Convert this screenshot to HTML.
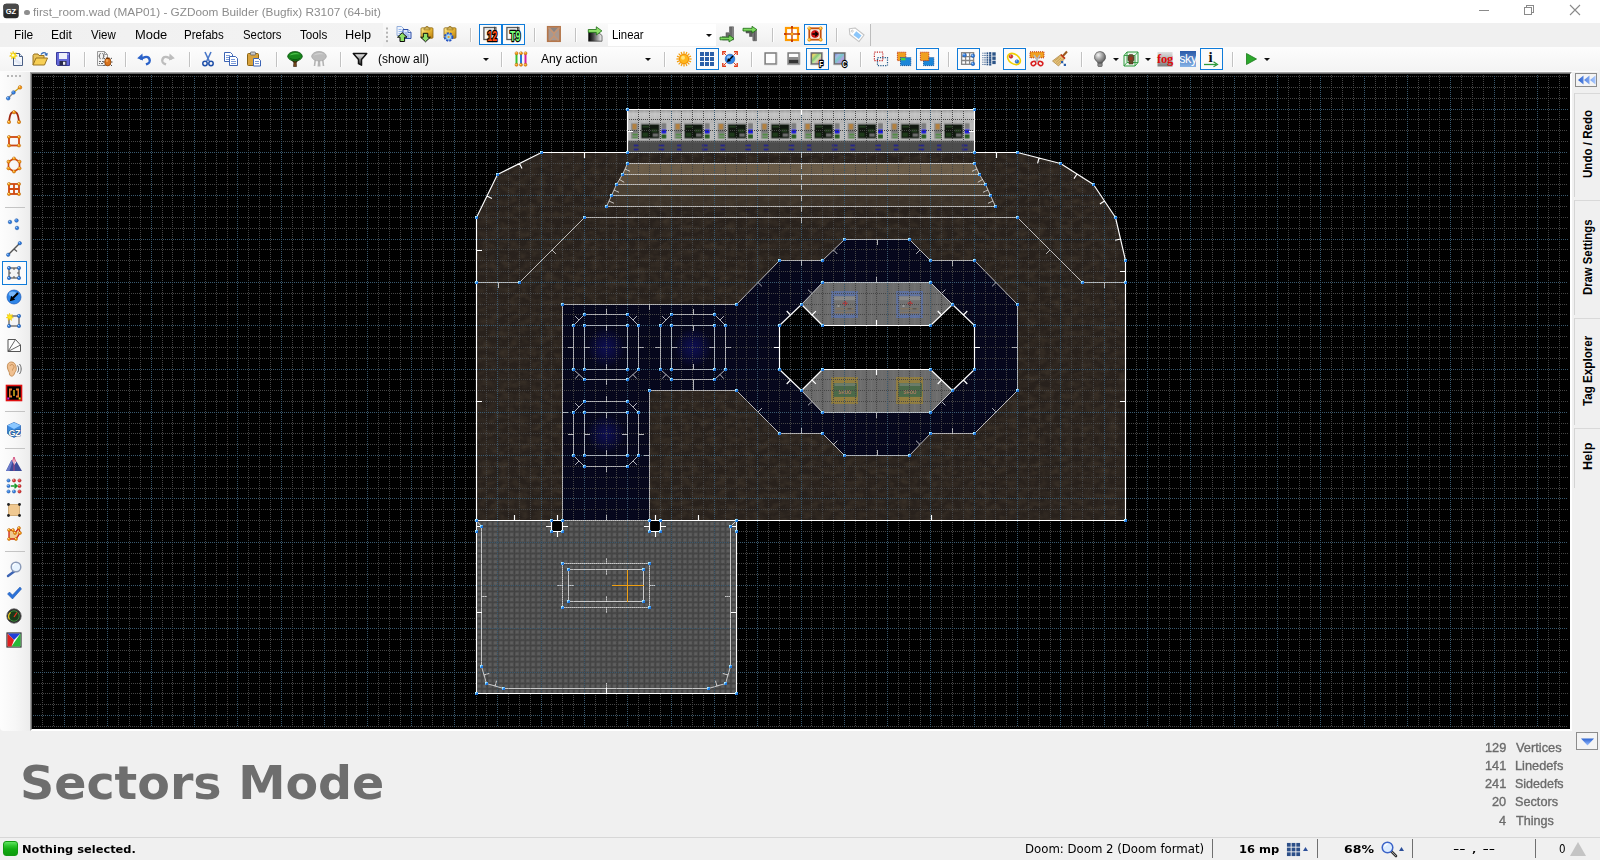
<!DOCTYPE html>
<html lang="en"><head><meta charset="utf-8"><title>first_room.wad (MAP01) - GZDoom Builder (Bugfix) R3107 (64-bit)</title>
<style>
*{box-sizing:border-box}
html,body{margin:0;padding:0}
body{width:1600px;height:860px;overflow:hidden;background:#f0f0f0;position:relative;font-family:"Liberation Sans",sans-serif;}
.abs{position:absolute}
.t{position:absolute;white-space:pre;line-height:normal;margin-top:-100px}
.t::before{content:"";display:inline-block;height:100px;width:0;vertical-align:baseline}
#titlebar{position:absolute;left:0;top:0;width:1600px;height:23px;background:#fff}
#menubar{position:absolute;left:0;top:23px;width:384px;height:24px;background:linear-gradient(90deg,#f0f0f0,#f3f3f3)}
#toolbar1{position:absolute;left:383px;top:23px;width:488px;height:24px;background:linear-gradient(#fafafa,#f5f5f5 55%,#eeeeee);border-radius:0 0 3px 0}
#menubar-end{position:absolute;left:870px;top:24px;width:1px;height:22px;background:#bdbdbd}
#toolbar2{position:absolute;left:0;top:47px;width:1600px;height:25px;background:linear-gradient(#fdfdfd,#f9f9f9 40%,#f4f4f4 94%,#fcfcfc 97%);border-radius:0 0 4px 0}
#lefttb{position:absolute;left:0;top:72px;width:30px;height:659px;background:linear-gradient(90deg,#fdfdfd,#f7f7f7 50%,#ececec);border-radius:0 0 0 4px}
#mapframe{position:absolute;left:30px;top:72px;width:1542px;height:659px;background:#000;border-style:solid;border-width:2px;border-color:#696969 #fff #fff #696969;}
#mapframe::before{content:"";position:absolute;left:-2px;top:-2px;right:-2px;bottom:-2px;border-style:solid;border-width:1px;border-color:#a0a0a0 #fff #fff #a0a0a0;pointer-events:none}
#map{position:absolute;left:32px;top:74px;width:1538px;height:655px;display:block}
.sep{position:absolute;width:1px;background:#c2c2c2;box-shadow:1px 0 0 #fff}
.hsep{position:absolute;height:1px;background:#c4c4c4}
.sel{position:absolute;border:1px solid #0f7bd9;background:#fbfbfb}
.ico{position:absolute;width:16px;height:16px;overflow:visible}
.combo{position:absolute;background:#fff;height:21px}
.arrow{position:absolute;width:0;height:0;border-left:3px solid transparent;border-right:3px solid transparent;border-top:3px solid #111}
.tab{position:absolute;left:1574px;width:26px;border-left:1px solid #d4d4d4;border-top:1px solid #d9d9d9;background:#f0f0f0}
.vt{position:absolute;white-space:pre;font:bold 13px "Liberation Sans",sans-serif;color:#000;transform-origin:0 0;line-height:14px;height:14px}
#statusbar{position:absolute;left:0;top:837px;width:1600px;height:23px;background:#f0f0f0;border-top:1px solid #d7d7d7}
.ssep{position:absolute;top:839px;width:1px;height:19px;background:#707070}
</style></head><body>
<div id="titlebar"></div>
<svg class="abs" style="left:3px;top:3px;width:16px;height:16px" viewBox="0 0 16 16"><rect x=".3" y=".8" width="15.4" height="14.400" rx="3" fill="#2a2a2a"/><rect x=".3" y=".8" width="15.4" height="7" rx="3" fill="#4a4a4a"/><text x="8" y="11" font-family="Liberation Sans,sans-serif" font-weight="bold" font-size="7.500" fill="#fff" text-anchor="middle">GZ</text></svg>
<div class="abs" style="left:24.300px;top:9.800px;width:5.400px;height:5.400px;border-radius:50%;background:#8e8e8e"></div>
<div class="t" style="left:33.18px;top:15.6px;font:11.800px 'Liberation Sans',sans-serif;color:#8c8c8c;transform:scaleX(0.9994);transform-origin:0 0;">first_room.wad (MAP01) - GZDoom Builder (Bugfix) R3107 (64-bit)</div>
<svg class="abs" style="left:1470px;top:0;width:130px;height:23px" viewBox="1470 0 130 23" fill="none" stroke="#8a8a8a" stroke-width="1"><path d="M1479 10.500h10" shape-rendering="crispEdges"/><path d="M1524.500 7.500h7v7h-7zM1526.500 7.500v-2h7v7h-2" shape-rendering="crispEdges"/><path d="M1570 5l10 10M1580 5l-10 10" stroke-width="1.100"/></svg>
<div id="menubar"></div><div id="toolbar1"></div><div id="menubar-end"></div>
<div class="t" style="left:14.34px;top:38.7px;font:12px 'Liberation Sans',sans-serif;color:#000;transform:scaleX(0.9954);transform-origin:0 0;">File</div>
<div class="t" style="left:51.33px;top:38.7px;font:12px 'Liberation Sans',sans-serif;color:#000;transform:scaleX(1.0059);transform-origin:0 0;">Edit</div>
<div class="t" style="left:91.30px;top:38.7px;font:12px 'Liberation Sans',sans-serif;color:#000;transform:scaleX(0.9564);transform-origin:0 0;">View</div>
<div class="t" style="left:134.57px;top:38.7px;font:12px 'Liberation Sans',sans-serif;color:#000;transform:scaleX(1.0748);transform-origin:0 0;">Mode</div>
<div class="t" style="left:184.48px;top:38.7px;font:12px 'Liberation Sans',sans-serif;color:#000;transform:scaleX(0.9606);transform-origin:0 0;">Prefabs</div>
<div class="t" style="left:242.69px;top:38.7px;font:12px 'Liberation Sans',sans-serif;color:#000;transform:scaleX(0.9466);transform-origin:0 0;">Sectors</div>
<div class="t" style="left:299.97px;top:38.7px;font:12px 'Liberation Sans',sans-serif;color:#000;transform:scaleX(0.9724);transform-origin:0 0;">Tools</div>
<div class="t" style="left:345.08px;top:38.7px;font:12px 'Liberation Sans',sans-serif;color:#000;transform:scaleX(1.0592);transform-origin:0 0;">Help</div>
<svg class="abs" style="left:385px;top:27px;width:4px;height:18px" viewBox="0 0 4 18"><rect x="1" y="0.5" width="2" height="2" fill="#b4b4b4"/><rect x="1" y="4.7" width="2" height="2" fill="#b4b4b4"/><rect x="1" y="8.9" width="2" height="2" fill="#b4b4b4"/><rect x="1" y="13.100000000000001" width="2" height="2" fill="#b4b4b4"/></svg>
<svg class="ico" style="left:395.5px;top:26.0px;width:16px;height:16px" viewBox="0 0 16 16" ><path d="M1 .5h4.500l2.500 2.500v6.500h-7z" fill="#f0f4fc" stroke="#8aa8d8" stroke-width=".9"/><path d="M2.500 3.500h3M2.500 5.500h4M2.500 7.500h4" stroke="#8ab4f0" stroke-width=".9"/><path d="M7 3.500h5l3 3v6H7z" fill="#dce6fb" stroke="#2c4fa8" stroke-width="1"/><path d="M12 3.500v3h3" fill="#fff" stroke="#2c4fa8" stroke-width=".8"/><path d="M8.500 7h3M8.500 9h5M8.500 11h5" stroke="#5c84d8" stroke-width=".9"/><path d="M6.200 6.700l4.800 4.500H8.600v4.300H4v-4.300H1.500z" fill="#8ee068" stroke="#0a0a0a" stroke-width="1" stroke-linejoin="round"/></svg>
<svg class="ico" style="left:419.5px;top:26.0px;width:16px;height:16px" viewBox="0 0 16 16" ><defs><linearGradient id="gClip1" x1="0" y1="0" x2="1" y2="1"><stop offset="0" stop-color="#fff0a0"/><stop offset=".45" stop-color="#ecbc38"/><stop offset="1" stop-color="#b87c10"/></linearGradient></defs><rect x="1" y="1.800" width="12" height="10.500" rx="1" fill="url(#gClip1)" stroke="#8a6414" stroke-width=".8"/><path d="M4 3.800V2.300h1.600L6 .5h2l.4 1.800H10v1.500z" fill="#f6dc78" stroke="#8a6414" stroke-width=".7"/><circle cx="7" cy="1.900" r=".7" fill="#7a5a14"/><path d="M5.500 15.800l-4.800-4.600h2.600V7.300h4.500v3.900h2.600z" fill="#8ee068" stroke="#0a0a0a" stroke-width="1" stroke-linejoin="round"/></svg>
<svg class="ico" style="left:442.5px;top:26.0px;width:16px;height:16px" viewBox="0 0 16 16" ><defs><linearGradient id="gClip2" x1="0" y1="0" x2="1" y2="1"><stop offset="0" stop-color="#fff0a0"/><stop offset=".45" stop-color="#ecbc38"/><stop offset="1" stop-color="#b87c10"/></linearGradient></defs><rect x="1" y="1.800" width="12" height="10.500" rx="1" fill="url(#gClip2)" stroke="#8a6414" stroke-width=".8"/><path d="M4 3.800V2.300h1.600L6 .5h2l.4 1.800H10v1.500z" fill="#f6dc78" stroke="#8a6414" stroke-width=".7"/><circle cx="7" cy="1.900" r=".7" fill="#7a5a14"/><circle cx="5.600" cy="11" r="3.700" fill="#9ccce8" stroke="#2450c0" stroke-width="2.200" stroke-dasharray="1.900 1.150"/><circle cx="5.600" cy="11" r="3" fill="#a8d8e8" stroke="#3c6cd0" stroke-width=".6"/><circle cx="5.600" cy="11" r="1.100" fill="#f0a020"/></svg>
<div class="sep" style="left:470px;top:28px;height:14px"></div>
<div class="sel" style="left:479px;top:24px;width:23px;height:21px"></div><div class="sel" style="left:502px;top:24px;width:23px;height:21px"></div>
<svg class="ico" style="left:483.0px;top:26.0px;width:16px;height:16px" viewBox="0 0 16 16" ><rect x=".9" y="1.500" width="12" height="12" fill="#f7f7f7" stroke="#5a5a5a" stroke-width="1.300"/><rect x="2.500" y="3.100" width="8.800" height="1.200" fill="#dcdcdc"/><path d="M11.500 .8v3" stroke="#444" stroke-width="1"/><text transform="translate(9.300 15) scale(.78 1.220)" x="0" y="0" font-family="Liberation Sans,sans-serif" font-weight="bold" font-size="11.500" fill="#ff4a10" stroke="#000" stroke-width="2.200" paint-order="stroke" stroke-linejoin="round" text-anchor="middle">12</text></svg>
<svg class="ico" style="left:506.0px;top:26.0px;width:16px;height:16px" viewBox="0 0 16 16" ><rect x=".9" y="1.500" width="12" height="12" fill="#f7f7f7" stroke="#5a5a5a" stroke-width="1.300"/><rect x="2.500" y="3.100" width="8.800" height="1.200" fill="#dcdcdc"/><path d="M11.500 .8v3" stroke="#444" stroke-width="1"/><text transform="translate(9.300 15) scale(.78 1.220)" x="0" y="0" font-family="Liberation Sans,sans-serif" font-weight="bold" font-size="11.500" fill="#7aff7a" stroke="#000" stroke-width="2.200" paint-order="stroke" stroke-linejoin="round" text-anchor="middle">T9</text></svg>
<div class="sep" style="left:534px;top:28px;height:14px"></div>
<svg class="ico" style="left:546.0px;top:26.0px;width:16px;height:16px" viewBox="0 0 16 16" ><rect x="1.700" y=".8" width="12.400" height="14.400" fill="#a89890" stroke="#b4764a" stroke-width="1.700"/><path d="M2.500 1.500L8 7.500 13.500 1.500M8 7.500V10M3.500 14.500L8 10l4.500 4.500" fill="none" stroke="#c89470" stroke-width="1.300"/><path d="M4.500 2h7L8 6z" fill="#8c8480"/></svg>
<div class="sep" style="left:575px;top:28px;height:14px"></div>
<svg class="ico" style="left:587.0px;top:26.0px;width:16px;height:16px" viewBox="0 0 16 16" ><defs><linearGradient id="gG" x1="0" y1="0" x2="1" y2="0"><stop offset="0" stop-color="#000"/><stop offset=".35" stop-color="#444"/><stop offset="1" stop-color="#fafafa"/></linearGradient></defs><path d="M1.500 6h9.500l4 3.500v5.700H1.500z" fill="url(#gG)" stroke="#3a3a3a" stroke-width=".7"/><path d="M1.300 3.500h8V.8l5.600 4.100-5.600 4.100V6.400h-8z" fill="#8ee068" stroke="#1c6a14" stroke-width=".8" stroke-linejoin="round"/></svg>
<div class="combo" style="left:608px;top:24px;width:108px;height:22px"></div>
<div class="t" style="left:612.09px;top:38.7px;font:12px 'Liberation Sans',sans-serif;color:#000;transform:scaleX(0.9491);transform-origin:0 0;">Linear</div>
<div class="arrow" style="left:706px;top:34px"></div>
<svg class="ico" style="left:719.0px;top:26.0px;width:16px;height:16px" viewBox="0 0 16 16" ><path d="M3.500 14V10.500h3.500V6.500h3.500V.8h4V14z" fill="#6a6a6a" stroke="#4a4a4a" stroke-width=".5"/><path d="M3.500 10.500h3.500M7 6.500h3.500" stroke="#9a9a9a" stroke-width="1"/><path d="M13.800 1v13" stroke="#8c8c8c" stroke-width="1"/><path d="M1 11.200h9V9l5 3.600-5 3.400v-2.200H1z" fill="#7ed860" stroke="#1c6a14" stroke-width=".8" stroke-linejoin="round"/></svg>
<svg class="ico" style="left:742.0px;top:26.0px;width:16px;height:16px" viewBox="0 0 16 16" ><path d="M4 7h3.500v3.500H11V14.800h3.500V4.500H4z" fill="#5c5c5c" stroke="#444" stroke-width=".5"/><path d="M11 6.500v8M14 5v9.500" stroke="#8a8a8a" stroke-width="1"/><path d="M1 2.300h9V.3l5 3.400-5 3.400V5H1z" fill="#7ed860" stroke="#1c6a14" stroke-width=".8" stroke-linejoin="round"/></svg>
<div class="sep" style="left:772px;top:28px;height:14px"></div>
<svg class="ico" style="left:784.0px;top:26.0px;width:16px;height:16px" viewBox="0 0 16 16" ><rect x="2" y="2" width="12" height="12" fill="#fff" stroke="#ff9a00" stroke-width="2.200"/><path d="M8 .2v15.600M.2 8h15.600" stroke="#c8420c" stroke-width="1.400"/><path d="M8 0v2M8 14v2M0 8h2M14 8h2" stroke="#c03000" stroke-width="1.600"/><circle cx="8" cy="8" r="1.500" fill="#ffb020" stroke="#d07000" stroke-width=".4"/></svg>
<div class="sel" style="left:804px;top:24px;width:23px;height:21px"></div>
<svg class="ico" style="left:806.6px;top:26.0px;width:16px;height:16px" viewBox="0 0 16 16" ><rect x="2.300" y="2.300" width="11.400" height="11.400" fill="#fbe8e0" stroke="#c8520c" stroke-width="1.800"/><circle cx="8" cy="8" r="3.600" fill="#e41414" stroke="#a00808" stroke-width=".6"/><path d="M5.300 8h4.500M8.200 5.800L10.600 8l-2.400 2.200" stroke="#000" stroke-width="1.300" fill="none"/><circle cx="2.3" cy="2.3" r="1.6" fill="#ffb428" stroke="#c87800" stroke-width="0.5"/><circle cx="1.82" cy="1.74" r="0.64" fill="#fff0a0"/><circle cx="13.7" cy="2.3" r="1.6" fill="#ffb428" stroke="#c87800" stroke-width="0.5"/><circle cx="13.22" cy="1.74" r="0.64" fill="#fff0a0"/><circle cx="2.3" cy="13.7" r="1.6" fill="#ffb428" stroke="#c87800" stroke-width="0.5"/><circle cx="1.82" cy="13.14" r="0.64" fill="#fff0a0"/><circle cx="13.7" cy="13.7" r="1.6" fill="#ffb428" stroke="#c87800" stroke-width="0.5"/><circle cx="13.22" cy="13.14" r="0.64" fill="#fff0a0"/></svg>
<div class="sep" style="left:836px;top:28px;height:14px"></div>
<svg class="ico" style="left:847.5px;top:25.5px;width:16px;height:16px" viewBox="0 0 16 16" ><g transform="rotate(38 8 8)"><path d="M-.5 8L3.500 3.800h11.500v8.400H3.500z" fill="#fff" stroke="#c4c4c4" stroke-width="1.100" stroke-linejoin="round"/><rect x="6.500" y="5.700" width="6.800" height="4.600" fill="#8cc6fa"/><circle cx="3.300" cy="8" r="1" fill="#fff" stroke="#b8b8b8" stroke-width=".7"/></g></svg>
<div id="toolbar2"></div>
<svg class="ico" style="left:9.0px;top:51.0px;width:16px;height:16px" viewBox="0 0 16 16" ><path d="M4.5 2.5h6l3 3v9h-9z" fill="#f4f7fc" stroke="#4a5f85" stroke-width="1"/><path d="M10.5 2.5v3h3" fill="#dfe7f4" stroke="#4a5f85" stroke-width="1"/><path d="M6 9l6 4" stroke="#e3e9f5" stroke-width="3"/><path d="M4 0.2l1 2.2 2.3-.7-1 2.1 2 1.3-2.3.5.2 2.4-1.8-1.5-1.8 1.5.2-2.4L.5 5.1l2-1.3-1-2.1 2.3.7z" fill="#ffe818" stroke="#e8b800" stroke-width=".5"/><circle cx="4" cy="4.2" r="1.2" fill="#fffbd0"/></svg>
<svg class="ico" style="left:32.0px;top:51.0px;width:16px;height:16px" viewBox="0 0 16 16" ><path d="M1 14V4.5l1-1.5h4l1 1.5h5V7" fill="#e9c35a" stroke="#9a7420" stroke-width="1"/><path d="M1 14l3-7h11.5l-3 7z" fill="#f7cf55" stroke="#9a7420" stroke-width="1"/><path d="M9 3.5c1.5-2.5 4.5-2.5 5.5 0" fill="none" stroke="#2f66b5" stroke-width="1.3"/><path d="M15.8 1.8l-.6 3.2-3-1z" fill="#2f66b5"/></svg>
<svg class="ico" style="left:55.0px;top:51.0px;width:16px;height:16px" viewBox="0 0 16 16" ><path d="M1.5 1.5h13v13h-12l-1-1z" fill="#6468d8" stroke="#3a3c9c" stroke-width="1"/><rect x="4" y="2" width="8" height="6" fill="#eef0fa"/><rect x="4.5" y="10" width="7" height="4.5" fill="#2a2a4a"/><rect x="8" y="10.8" width="2.3" height="3" fill="#e8e8f0"/><rect x="12.5" y="2.5" width="1" height="1.5" fill="#c0c4f0"/></svg>
<div class="sep" style="left:84px;top:52px;height:15px"></div>
<svg class="ico" style="left:96.0px;top:51.0px;width:16px;height:16px" viewBox="0 0 16 16" ><path d="M1.5 .5h7l3 3v11h-10z" fill="#f2f2f2" stroke="#9a9a9a" stroke-width="1"/><path d="M8.5 .5v3h3" fill="none" stroke="#9a9a9a" stroke-width="1"/><path d="M4.6 2.5c-1 0-1 .6-1 1.4s-.2 1.2-.9 1.2c.7 0 .9.4.9 1.2s0 1.4 1 1.4M6.4 2.5c1 0 1 .6 1 1.4s.2 1.2.9 1.2c-.7 0-.9.4-.9 1.2s0 1.4-1 1.4" fill="none" stroke="#555" stroke-width=".9"/><path d="M3 10.5h2M6 10.5h1.5M3 12.5h1M5 12.5h2" stroke="#666" stroke-width="1"/><path d="M9 8l-1.5-1M14.5 8l1.5-1M8.7 11H7M15 11h1.5M9 13.5L7.5 15M14.5 13.5L16 15" stroke="#222" stroke-width=".8"/><ellipse cx="11.8" cy="11" rx="3.1" ry="3.9" fill="#d8731c" stroke="#8a3c00" stroke-width=".7"/><ellipse cx="11" cy="9.6" rx="1.2" ry="1.5" fill="#f3a254"/><path d="M10 7.2h3.6" stroke="#6a2c00" stroke-width="1.2"/></svg>
<div class="sep" style="left:125px;top:52px;height:15px"></div>
<svg class="ico" style="left:136.0px;top:51.0px;width:16px;height:16px" viewBox="0 0 16 16" ><path d="M4.5 6.5h5a3.6 3.6 0 010 7.2H8" fill="none" stroke="#2b62c9" stroke-width="2.4" stroke-linecap="butt" transform="rotate(-20 8 8)"/><path d="M1.2 7.2l5.2-4.6.6 7z" fill="#2b62c9"/></svg>
<svg class="ico" style="left:160.0px;top:51.0px;width:16px;height:16px" viewBox="0 0 16 16" ><g transform="translate(16 0) scale(-1 1)"><path d="M4.5 6.5h5a3.6 3.6 0 010 7.2H8" fill="none" stroke="#bdbdbd" stroke-width="2.4" transform="rotate(-20 8 8)"/><path d="M1.2 7.2l5.2-4.6.6 7z" fill="#bdbdbd"/></g></svg>
<div class="sep" style="left:189px;top:52px;height:15px"></div>
<svg class="ico" style="left:200.0px;top:51.0px;width:16px;height:16px" viewBox="0 0 16 16" ><path d="M5 1l4.2 9M11 1L6.8 10" stroke="#4a78c8" stroke-width="1.6" fill="none"/><circle cx="5" cy="12.5" r="2.2" fill="none" stroke="#1f4fa8" stroke-width="1.5"/><circle cx="11" cy="12.5" r="2.2" fill="none" stroke="#1f4fa8" stroke-width="1.5"/></svg>
<svg class="ico" style="left:223.0px;top:51.0px;width:16px;height:16px" viewBox="0 0 16 16" ><path d="M1.5 1.5h6l2 2v7h-8z" fill="#fff" stroke="#3c64b4" stroke-width="1"/><path d="M3 4.5h4M3 6.5h5M3 8.5h5" stroke="#7a9ad8" stroke-width="1"/><path d="M6.5 5.5h6l2 2v7h-8z" fill="#fff" stroke="#3c64b4" stroke-width="1"/><path d="M8 8.5h4M8 10.5h5M8 12.5h5" stroke="#7a9ad8" stroke-width="1"/></svg>
<svg class="ico" style="left:246.0px;top:51.0px;width:16px;height:16px" viewBox="0 0 16 16" ><rect x="1.5" y="2.5" width="11" height="12" rx="1" fill="#d8a23c" stroke="#8a6414" stroke-width="1"/><rect x="4.5" y="1" width="5" height="3" rx=".8" fill="#c9c9c9" stroke="#666" stroke-width=".8"/><path d="M7.5 7.5h5l2 2v5.5h-7z" fill="#fff" stroke="#3c64b4" stroke-width="1"/><path d="M9 10.5h4M9 12.5h4" stroke="#7a9ad8" stroke-width="1"/></svg>
<div class="sep" style="left:276px;top:52px;height:15px"></div>
<svg class="ico" style="left:287.0px;top:51.0px;width:16px;height:16px" viewBox="0 0 16 16" ><path d="M7.200 8.500h1.800l.5 7H6.500z" fill="#7a4a1c" stroke="#2a1a08" stroke-width=".6"/><path d="M4.500 8.500l3 3M11.500 8.500l-3 3" stroke="#3a2208" stroke-width="1.300"/><ellipse cx="8" cy="5.300" rx="7.300" ry="4.700" fill="#17861b" stroke="#0b4f0e" stroke-width=".8"/><path d="M2.500 4.500c2-2.700 7-3.300 10.500-1.200-3-.3-7 .2-10.500 1.200z" fill="#4cc24a"/><path d="M3 7.500c3 1.500 7 1.500 10 0" stroke="#0b5a10" stroke-width="1" fill="none"/></svg>
<svg class="ico" style="left:311.0px;top:51.0px;width:16px;height:16px" viewBox="0 0 16 16" ><path d="M7.200 8.500h1.800l.5 7H6.500zM3.500 8.500l-.8 6.500h1.600l.7-6zM12.500 8.500l.8 6.500h-1.600l-.7-6z" fill="#b4b4b4"/><ellipse cx="8" cy="5.300" rx="7.300" ry="4.700" fill="#bcbcbc" stroke="#a4a4a4" stroke-width=".8"/><path d="M2.500 4.500c2-2.700 7-3.300 10.500-1.200-3-.3-7 .2-10.500 1.200z" fill="#d0d0d0"/></svg>
<div class="sep" style="left:340px;top:52px;height:15px"></div>
<svg class="ico" style="left:352.0px;top:51.0px;width:16px;height:16px" viewBox="0 0 16 16" ><defs><linearGradient id="gFil" x1="0" y1="0" x2="0" y2="1"><stop offset="0" stop-color="#f4f4f4"/><stop offset=".45" stop-color="#9a9a9a"/><stop offset="1" stop-color="#222"/></linearGradient></defs><path d="M1.300 2.500h13.400L9.500 8.500v5.700l-3-1.500V8.500z" fill="url(#gFil)" stroke="#111" stroke-width="1.500" stroke-linejoin="round"/></svg>
<div class="sep" style="left:501px;top:52px;height:15px"></div>
<svg class="ico" style="left:513.0px;top:51.0px;width:16px;height:16px" viewBox="0 0 16 16" ><path d="M3.500 3v10" stroke="#38c030" stroke-width="2"/><path d="M8 3v10" stroke="#2878d8" stroke-width="2"/><path d="M12.500 3v10" stroke="#d020a0" stroke-width="2"/><circle cx="3.5" cy="2.2" r="1.5" fill="#f59a16" stroke="#b35a00" stroke-width="0.5"/><circle cx="3.05" cy="1.68" r="0.60" fill="#ffe08a"/><circle cx="3.5" cy="13.8" r="1.5" fill="#f59a16" stroke="#b35a00" stroke-width="0.5"/><circle cx="3.05" cy="13.28" r="0.60" fill="#ffe08a"/><circle cx="8" cy="2.2" r="1.5" fill="#f59a16" stroke="#b35a00" stroke-width="0.5"/><circle cx="7.55" cy="1.68" r="0.60" fill="#ffe08a"/><circle cx="8" cy="13.8" r="1.5" fill="#f59a16" stroke="#b35a00" stroke-width="0.5"/><circle cx="7.55" cy="13.28" r="0.60" fill="#ffe08a"/><circle cx="12.5" cy="2.2" r="1.5" fill="#f59a16" stroke="#b35a00" stroke-width="0.5"/><circle cx="12.05" cy="1.68" r="0.60" fill="#ffe08a"/><circle cx="12.5" cy="13.8" r="1.5" fill="#f59a16" stroke="#b35a00" stroke-width="0.5"/><circle cx="12.05" cy="13.28" r="0.60" fill="#ffe08a"/></svg>
<div class="sep" style="left:664px;top:52px;height:15px"></div>
<svg class="ico" style="left:676.0px;top:51.0px;width:16px;height:16px" viewBox="0 0 16 16" ><g stroke="#f3a012" stroke-width="1.300"><path d="M8 8L15.60 8.00"/><path d="M8 8L15.02 10.91"/><path d="M8 8L13.37 13.37"/><path d="M8 8L10.91 15.02"/><path d="M8 8L8.00 15.60"/><path d="M8 8L5.09 15.02"/><path d="M8 8L2.63 13.37"/><path d="M8 8L0.98 10.91"/><path d="M8 8L0.40 8.00"/><path d="M8 8L0.98 5.09"/><path d="M8 8L2.63 2.63"/><path d="M8 8L5.09 0.98"/><path d="M8 8L8.00 0.40"/><path d="M8 8L10.91 0.98"/><path d="M8 8L13.37 2.63"/><path d="M8 8L15.02 5.09"/></g><circle cx="8" cy="8" r="4.600" fill="#ffb61c" stroke="#f08c00" stroke-width=".8"/><circle cx="7" cy="6.800" r="2" fill="#ffe27a"/></svg>
<div class="sel" style="left:696px;top:48px;width:23px;height:22px"></div>
<svg class="ico" style="left:699.0px;top:51.0px;width:16px;height:16px" viewBox="0 0 16 16" ><rect x="1" y="1" width="4" height="4" fill="#2c5fa8"/><rect x="1" y="6" width="4" height="4" fill="#2c5fa8"/><rect x="1" y="11" width="4" height="4" fill="#2c5fa8"/><rect x="6" y="1" width="4" height="4" fill="#2c5fa8"/><rect x="6" y="6" width="4" height="4" fill="#2c5fa8"/><rect x="6" y="11" width="4" height="4" fill="#2c5fa8"/><rect x="11" y="1" width="4" height="4" fill="#2c5fa8"/><rect x="11" y="6" width="4" height="4" fill="#2c5fa8"/><rect x="11" y="11" width="4" height="4" fill="#2c5fa8"/></svg>
<svg class="ico" style="left:722.0px;top:51.0px;width:16px;height:16px" viewBox="0 0 16 16" ><path d="M.8 4V.8H4M12 .8h3.200V4M15.200 12v3.200H12M4 15.200H.8V12" fill="none" stroke="#e03a1a" stroke-width="1.400"/><path d="M2 2l2.500 2.500M14 2l-2.500 2.500M14 14l-2.500-2.500M2 14l2.500-2.500" stroke="#e03a1a" stroke-width="1"/><circle cx="8" cy="8" r="4.800" fill="#2f86e8" stroke="#1858b8" stroke-width=".6"/><circle cx="6.800" cy="6.400" r="2" fill="#8cc4ff"/><path d="M11 5L6.500 9.500" stroke="#000" stroke-width="1.500"/><path d="M5 11l1-4 3 3z" fill="#000"/></svg>
<div class="sep" style="left:751px;top:52px;height:15px"></div>
<svg class="ico" style="left:762.0px;top:51.0px;width:16px;height:16px" viewBox="0 0 16 16" ><rect x="3.100" y="2" width="11" height="11" fill="#fdfdfd" stroke="#7a7a7a" stroke-width="1.500"/><path d="M2.400 13.700h12.500V1.300" fill="none" stroke="#a8a8a8" stroke-width=".8"/></svg>
<svg class="ico" style="left:785.0px;top:51.0px;width:16px;height:16px" viewBox="0 0 16 16" ><rect x="3.100" y="2" width="11" height="11" fill="#fdfdfd" stroke="#7a7a7a" stroke-width="1.500"/><rect x="3.900" y="6" width="9.400" height="2.600" fill="#8c8c8c"/><rect x="3.900" y="8.600" width="9.400" height="3.700" fill="#343434"/><path d="M2.400 13.700h12.500V1.300" fill="none" stroke="#a8a8a8" stroke-width=".8"/></svg>
<div class="sel" style="left:806px;top:48px;width:23px;height:22px"></div>
<svg class="ico" style="left:809.0px;top:51.0px;width:16px;height:16px" viewBox="0 0 16 16" ><defs><linearGradient id="gF" x1="0" y1="0" x2="1" y2="1" spreadMethod="repeat"><stop offset="0" stop-color="#b89a28"/><stop offset=".2" stop-color="#e8d870"/><stop offset=".4" stop-color="#88c878"/><stop offset=".55" stop-color="#c8e8a0"/><stop offset=".75" stop-color="#d8a0b8"/><stop offset="1" stop-color="#c8b040"/></linearGradient></defs><rect x="2.300" y="2" width="10.500" height="11" fill="url(#gF)" stroke="#6a6a6a" stroke-width="1.500"/><path d="M1.600 13.700h12V1.300" fill="none" stroke="#a0a0a0" stroke-width=".8"/><text transform="translate(12.300 15.500) scale(.8 1.100)" font-family="Liberation Sans,sans-serif" font-weight="bold" font-size="8" fill="#fff" stroke="#000" stroke-width="2.200" paint-order="stroke" stroke-linejoin="round" text-anchor="middle">F</text></svg>
<svg class="ico" style="left:832.0px;top:51.0px;width:16px;height:16px" viewBox="0 0 16 16" ><defs><linearGradient id="gC" x1="0" y1="0" x2="1" y2="1"><stop offset="0" stop-color="#5878c8"/><stop offset=".25" stop-color="#a8b8e8"/><stop offset=".45" stop-color="#78c8c8"/><stop offset=".65" stop-color="#b0a0e0"/><stop offset="1" stop-color="#6890d0"/></linearGradient></defs><rect x="2.300" y="2" width="10.500" height="11" fill="url(#gC)" stroke="#6a6a6a" stroke-width="1.500"/><path d="M1.600 13.700h12V1.300" fill="none" stroke="#a0a0a0" stroke-width=".8"/><text transform="translate(12.600 15.500) scale(.8 1.100)" font-family="Liberation Sans,sans-serif" font-weight="bold" font-size="8" fill="#fff" stroke="#000" stroke-width="2.200" paint-order="stroke" stroke-linejoin="round" text-anchor="middle">C</text></svg>
<div class="sep" style="left:860px;top:52px;height:15px"></div>
<svg class="ico" style="left:873.0px;top:51.0px;width:16px;height:16px" viewBox="0 0 16 16" ><rect x="1.400" y="1.200" width="8.400" height="8.400" fill="none" stroke="#c02020" stroke-width="1.200" stroke-dasharray="1.200 1.200"/><rect x="4.500" y="6.600" width="10" height="8" fill="none" stroke="#205888" stroke-width="1.200" stroke-dasharray="1.200 1.200"/></svg>
<svg class="ico" style="left:896.0px;top:51.0px;width:16px;height:16px" viewBox="0 0 16 16" ><rect x="1.400" y="1.200" width="8.400" height="8.400" fill="#f0a020" stroke="#c03010" stroke-width="1" stroke-dasharray="1 1"/><rect x="4.500" y="6.600" width="10.300" height="8" fill="#1c86d8" stroke="#0c4c98" stroke-width="1" stroke-dasharray="1 1"/><rect x="5" y="7.100" width="4.400" height="2.200" fill="#48d838"/></svg>
<div class="sel" style="left:916px;top:48px;width:23px;height:22px"></div>
<svg class="ico" style="left:919.0px;top:51.0px;width:16px;height:16px" viewBox="0 0 16 16" ><rect x="4.500" y="6.600" width="10.300" height="8" fill="#1c86d8" stroke="#0c4c98" stroke-width="1" stroke-dasharray="1 1"/><rect x="1.400" y="1.200" width="8.400" height="8.400" fill="#f0a020" stroke="#c03010" stroke-width="1" stroke-dasharray="1 1"/></svg>
<div class="sep" style="left:948px;top:52px;height:15px"></div>
<div class="sel" style="left:957px;top:48px;width:23px;height:22px"></div>
<svg class="ico" style="left:960.0px;top:51.0px;width:16px;height:16px" viewBox="0 0 16 16" ><rect x="1.600" y="1.700" width="12" height="11.600" fill="#fff" stroke="#858585" stroke-width="1.300"/><path d="M5.600 1.700v11.600M9.600 1.700v11.600M1.600 5.600h12M1.600 9.500h12" stroke="#858585" stroke-width="1.300"/><circle cx="4.5" cy="4.2" r="1.8" fill="#2f7de0" stroke="#154a9a" stroke-width="0.5"/><circle cx="3.96" cy="3.57" r="0.72" fill="#a8d4ff"/><circle cx="12.9" cy="4.8" r="1.8" fill="#2f7de0" stroke="#154a9a" stroke-width="0.5"/><circle cx="12.36" cy="4.17" r="0.72" fill="#a8d4ff"/><circle cx="12.9" cy="12.9" r="1.8" fill="#2f7de0" stroke="#154a9a" stroke-width="0.5"/><circle cx="12.36" cy="12.27" r="0.72" fill="#a8d4ff"/></svg>
<svg class="ico" style="left:982.0px;top:51.0px;width:16px;height:16px" viewBox="0 0 16 16" ><rect x="0.40" y="1.70" width="1.0" height="1.0" fill="#2c5488"/><rect x="0.40" y="3.95" width="1.0" height="1.0" fill="#2c5488"/><rect x="0.40" y="6.20" width="1.0" height="1.0" fill="#2c5488"/><rect x="0.40" y="8.45" width="1.0" height="1.0" fill="#2c5488"/><rect x="0.40" y="10.70" width="1.0" height="1.0" fill="#2c5488"/><rect x="0.40" y="12.95" width="1.0" height="1.0" fill="#2c5488"/><rect x="2.40" y="1.60" width="1.2" height="1.2" fill="#2c5488"/><rect x="2.40" y="3.85" width="1.2" height="1.2" fill="#2c5488"/><rect x="2.40" y="6.10" width="1.2" height="1.2" fill="#2c5488"/><rect x="2.40" y="8.35" width="1.2" height="1.2" fill="#2c5488"/><rect x="2.40" y="10.60" width="1.2" height="1.2" fill="#2c5488"/><rect x="2.40" y="12.85" width="1.2" height="1.2" fill="#2c5488"/><rect x="4.55" y="1.35" width="1.7" height="1.7" fill="#2c5488"/><rect x="4.55" y="3.60" width="1.7" height="1.7" fill="#2c5488"/><rect x="4.55" y="5.85" width="1.7" height="1.7" fill="#2c5488"/><rect x="4.55" y="8.10" width="1.7" height="1.7" fill="#2c5488"/><rect x="4.55" y="10.35" width="1.7" height="1.7" fill="#2c5488"/><rect x="4.55" y="12.60" width="1.7" height="1.7" fill="#2c5488"/><rect x="7.10" y="1.10" width="2.2" height="2.2" fill="#2c5488"/><rect x="7.10" y="3.35" width="2.2" height="2.2" fill="#2c5488"/><rect x="7.10" y="5.60" width="2.2" height="2.2" fill="#2c5488"/><rect x="7.10" y="7.85" width="2.2" height="2.2" fill="#2c5488"/><rect x="7.10" y="10.10" width="2.2" height="2.2" fill="#2c5488"/><rect x="7.10" y="12.35" width="2.2" height="2.2" fill="#2c5488"/><rect x="10.300" y="1.30" width="3.400" height="3.400" fill="#2c5488"/><rect x="10.300" y="5.50" width="3.400" height="3.400" fill="#2c5488"/><rect x="10.300" y="9.70" width="3.400" height="3.400" fill="#2c5488"/></svg>
<div class="sel" style="left:1003px;top:48px;width:23px;height:22px"></div>
<svg class="ico" style="left:1006.0px;top:51.0px;width:16px;height:16px" viewBox="0 0 16 16" ><ellipse cx="8" cy="8" rx="7" ry="4.800" fill="none" stroke="#f0d000" stroke-width="1.600" transform="rotate(35 8 8)"/><circle cx="5" cy="5.5" r="1.8" fill="#e03030" stroke="#901010" stroke-width="0.5"/><circle cx="4.46" cy="4.87" r="0.72" fill="#ffb0b0"/><circle cx="11" cy="10.5" r="1.8" fill="#2f7de0" stroke="#154a9a" stroke-width="0.5"/><circle cx="10.46" cy="9.87" r="0.72" fill="#a8d4ff"/></svg>
<svg class="ico" style="left:1029.0px;top:51.0px;width:16px;height:16px" viewBox="0 0 16 16" ><rect x="1" y=".8" width="14" height="6" fill="#f0a020" stroke="#c03010" stroke-width="1" stroke-dasharray="1 1"/><path d="M5 4l4.500 7M11 4L6.500 11" stroke="#b8b8b8" stroke-width="1.600"/><ellipse cx="4.500" cy="12.500" rx="2.400" ry="2" fill="none" stroke="#d82020" stroke-width="1.500" transform="rotate(-30 4.500 12.500)"/><ellipse cx="11.500" cy="12.500" rx="2.400" ry="2" fill="none" stroke="#d82020" stroke-width="1.500" transform="rotate(30 11.500 12.500)"/></svg>
<svg class="ico" style="left:1052.0px;top:51.0px;width:16px;height:16px" viewBox="0 0 16 16" ><path d="M15 .5l-4.500 5" stroke="#9a5a20" stroke-width="2"/><path d="M9 3.500l4 3.500-6.500 8L.5 10z" fill="#e4c078" stroke="#a8803c" stroke-width=".7"/><path d="M2.500 10l5-4M4 11.500l5-4.500M5.500 13l5-5" stroke="#b89048" stroke-width=".7"/><path d="M9.500 3l4 4-1.200 1.300-4-4z" fill="#c03818"/><rect x="9" y="10" width="2.500" height="2.500" fill="#2c5fa8"/><rect x="11.500" y="12.500" width="2.500" height="2.500" fill="#2c5fa8"/><rect x="11.500" y="10" width="2.500" height="2.500" fill="#fff"/><rect x="9" y="12.500" width="2.500" height="2.500" fill="#fff"/></svg>
<div class="sep" style="left:1081px;top:52px;height:15px"></div>
<svg class="ico" style="left:1092.0px;top:51.0px;width:16px;height:16px" viewBox="0 0 16 16" ><defs><radialGradient id="gB" cx=".35" cy=".3" r=".8"><stop offset="0" stop-color="#f4f4f4"/><stop offset=".5" stop-color="#9a9a9a"/><stop offset="1" stop-color="#4a4a4a"/></radialGradient></defs><path d="M8 .5a5.500 5.500 0 013.200 10c-.6.500-.9 1-.9 1.800H5.700c0-.8-.3-1.300-.9-1.800A5.500 5.500 0 018 .5z" fill="url(#gB)" stroke="#444" stroke-width=".6"/><rect x="5.800" y="12.300" width="4.400" height="3.200" rx=".8" fill="#8a8a8a" stroke="#444" stroke-width=".6"/></svg>
<svg class="ico" style="left:1123.0px;top:51.0px;width:16px;height:16px" viewBox="0 0 16 16" ><path d="M1 4.500l3-3.500h11v10.500l-3 3.500H1z" fill="#eaf6ea" stroke="#2c9a3c" stroke-width="1"/><path d="M1 4.500h11v10.500M12 4.500l3-3.500M4 1v10.500h11M4 11.500l-3 3.500" fill="none" stroke="#2c9a3c" stroke-width=".9"/><path d="M6.500 3.500h3l1.500 2v4l-1 .5v3H6v-3l-1-.5v-4z" fill="#6a4a2a" stroke="#3a2a1a" stroke-width=".5"/><rect x="6.800" y="6" width="2.600" height="3" fill="#a03020"/></svg>
<svg class="ico" style="left:1157.0px;top:51.0px;width:16px;height:16px" viewBox="0 0 16 16" ><defs><linearGradient id="gFog" x1="0" y1="0" x2="0" y2="1"><stop offset="0" stop-color="#e0e0e0"/><stop offset="1" stop-color="#7c7c7c"/></linearGradient></defs><rect x=".5" y="1" width="15" height="14.500" fill="url(#gFog)"/><text x="8" y="12" font-family="Liberation Serif,serif" font-weight="bold" font-size="12.500" fill="#e00808" text-anchor="middle" letter-spacing="-.3">fog</text></svg>
<svg class="ico" style="left:1180.0px;top:51.0px;width:16px;height:16px" viewBox="0 0 16 16" ><defs><linearGradient id="gS" x1="0" y1="0" x2="0" y2="1"><stop offset="0" stop-color="#2a5aa8"/><stop offset="1" stop-color="#86b2e6"/></linearGradient></defs><rect x="0" y="0" width="16" height="16" fill="url(#gS)"/><text x="8" y="12" font-family="Liberation Sans,sans-serif" font-size="12.500" fill="#fff" text-anchor="middle" letter-spacing="-.4">sky</text></svg>
<div class="sel" style="left:1200px;top:48px;width:23px;height:22px"></div>
<svg class="ico" style="left:1203.0px;top:51.0px;width:16px;height:16px" viewBox="0 0 16 16" ><text x="7.500" y="10.500" font-family="Liberation Serif,serif" font-weight="bold" font-size="15" fill="#111" text-anchor="middle">i</text><path d="M1 13.500h12" stroke="#2c9a3c" stroke-width="1.300"/><path d="M10.500 10.800l4 2.700-4 2.200" fill="none" stroke="#2c9a3c" stroke-width="1.200"/></svg>
<div class="sep" style="left:1232px;top:52px;height:15px"></div>
<svg class="ico" style="left:1243.0px;top:51.0px;width:16px;height:16px" viewBox="0 0 16 16" ><path d="M3.500 2.500l10 5.500-10 5.500z" fill="#2ca82c" stroke="#1a7a1a" stroke-width=".8"/></svg>
<div class="t" style="left:377.98px;top:62.6px;font:12px 'Liberation Sans',sans-serif;color:#000;transform:scaleX(0.9934);transform-origin:0 0;">(show all)</div>
<div class="arrow" style="left:483px;top:58px"></div>
<div class="t" style="left:540.60px;top:62.6px;font:12px 'Liberation Sans',sans-serif;color:#000;transform:scaleX(1.0054);transform-origin:0 0;">Any action</div>
<div class="arrow" style="left:645px;top:58px"></div>
<div class="arrow" style="left:1113px;top:58px"></div>
<div class="arrow" style="left:1145px;top:58px"></div>
<div class="arrow" style="left:1264px;top:58px"></div>
<div id="lefttb"></div>
<svg class="abs" style="left:6px;top:75px;width:16px;height:3px" viewBox="0 0 16 3"><rect x="1" y="0" width="2" height="2" fill="#b8b8b8"/><rect x="5" y="0" width="2" height="2" fill="#b8b8b8"/><rect x="9" y="0" width="2" height="2" fill="#b8b8b8"/><rect x="13" y="0" width="2" height="2" fill="#b8b8b8"/></svg>
<svg class="ico" style="left:5.800000000000001px;top:85.0px;width:16px;height:16px" viewBox="0 0 16 16" ><path d="M2 13.500L8 7" stroke="#8a8a8a" stroke-width="1.300"/><path d="M8 7l6.500-5" stroke="#c8a018" stroke-width="1.300"/><circle cx="2.2" cy="13.3" r="1.8" fill="#2f7de0" stroke="#154a9a" stroke-width="0.5"/><circle cx="1.66" cy="12.67" r="0.72" fill="#a8d4ff"/><circle cx="7.5" cy="7.5" r="1.8" fill="#2f7de0" stroke="#154a9a" stroke-width="0.5"/><circle cx="6.96" cy="6.87" r="0.72" fill="#a8d4ff"/><circle cx="14" cy="2.4" r="1.8" fill="#f59a16" stroke="#b35a00" stroke-width="0.5"/><circle cx="13.46" cy="1.77" r="0.72" fill="#ffe08a"/></svg>
<svg class="ico" style="left:5.800000000000001px;top:109.0px;width:16px;height:16px" viewBox="0 0 16 16" ><path d="M3 13C4 3 6 3 8 3s4 0 5 10" fill="none" stroke="#a02810" stroke-width="1.800"/><circle cx="3" cy="13" r="1.7" fill="#f59a16" stroke="#b35a00" stroke-width="0.5"/><circle cx="2.49" cy="12.40" r="0.68" fill="#ffe08a"/><circle cx="13" cy="13" r="1.7" fill="#f59a16" stroke="#b35a00" stroke-width="0.5"/><circle cx="12.49" cy="12.40" r="0.68" fill="#ffe08a"/><circle cx="8" cy="3.2" r="1.7" fill="#f59a16" stroke="#b35a00" stroke-width="0.5"/><circle cx="7.49" cy="2.61" r="0.68" fill="#ffe08a"/></svg>
<svg class="ico" style="left:5.800000000000001px;top:133.0px;width:16px;height:16px" viewBox="0 0 16 16" ><rect x="3" y="4" width="10" height="8.500" fill="none" stroke="#d04810" stroke-width="1.800"/><circle cx="3" cy="4" r="1.6" fill="#f59a16" stroke="#b35a00" stroke-width="0.5"/><circle cx="2.52" cy="3.44" r="0.64" fill="#ffe08a"/><circle cx="13" cy="4" r="1.6" fill="#f59a16" stroke="#b35a00" stroke-width="0.5"/><circle cx="12.52" cy="3.44" r="0.64" fill="#ffe08a"/><circle cx="3" cy="12.5" r="1.6" fill="#f59a16" stroke="#b35a00" stroke-width="0.5"/><circle cx="2.52" cy="11.94" r="0.64" fill="#ffe08a"/><circle cx="13" cy="12.5" r="1.6" fill="#f59a16" stroke="#b35a00" stroke-width="0.5"/><circle cx="12.52" cy="11.94" r="0.64" fill="#ffe08a"/></svg>
<svg class="ico" style="left:5.800000000000001px;top:157.0px;width:16px;height:16px" viewBox="0 0 16 16" ><path d="M8 1.500l5.500 3.200v6.600L8 14.500 2.500 11.300V4.700z" fill="none" stroke="#d04810" stroke-width="1.600"/><circle cx="8" cy="1.5" r="1.6" fill="#f59a16" stroke="#b35a00" stroke-width="0.5"/><circle cx="7.52" cy="0.94" r="0.64" fill="#ffe08a"/><circle cx="13.5" cy="4.7" r="1.6" fill="#f59a16" stroke="#b35a00" stroke-width="0.5"/><circle cx="13.02" cy="4.14" r="0.64" fill="#ffe08a"/><circle cx="13.5" cy="11.3" r="1.6" fill="#f59a16" stroke="#b35a00" stroke-width="0.5"/><circle cx="13.02" cy="10.74" r="0.64" fill="#ffe08a"/><circle cx="8" cy="14.5" r="1.6" fill="#f59a16" stroke="#b35a00" stroke-width="0.5"/><circle cx="7.52" cy="13.94" r="0.64" fill="#ffe08a"/><circle cx="2.5" cy="11.3" r="1.6" fill="#f59a16" stroke="#b35a00" stroke-width="0.5"/><circle cx="2.02" cy="10.74" r="0.64" fill="#ffe08a"/><circle cx="2.5" cy="4.7" r="1.6" fill="#f59a16" stroke="#b35a00" stroke-width="0.5"/><circle cx="2.02" cy="4.14" r="0.64" fill="#ffe08a"/></svg>
<svg class="ico" style="left:5.800000000000001px;top:181.0px;width:16px;height:16px" viewBox="0 0 16 16" ><rect x="3" y="3" width="10" height="10" fill="none" stroke="#d04810" stroke-width="1.800"/><path d="M8 3v10M3 8h10" stroke="#d04810" stroke-width="1.800"/><circle cx="3" cy="3" r="1.6" fill="#f59a16" stroke="#b35a00" stroke-width="0.5"/><circle cx="2.52" cy="2.44" r="0.64" fill="#ffe08a"/><circle cx="13" cy="3" r="1.6" fill="#f59a16" stroke="#b35a00" stroke-width="0.5"/><circle cx="12.52" cy="2.44" r="0.64" fill="#ffe08a"/><circle cx="3" cy="13" r="1.6" fill="#f59a16" stroke="#b35a00" stroke-width="0.5"/><circle cx="2.52" cy="12.44" r="0.64" fill="#ffe08a"/><circle cx="13" cy="13" r="1.6" fill="#f59a16" stroke="#b35a00" stroke-width="0.5"/><circle cx="12.52" cy="12.44" r="0.64" fill="#ffe08a"/></svg>
<div class="hsep" style="left:5px;top:207px;width:20px"></div>
<svg class="ico" style="left:5.800000000000001px;top:217.0px;width:16px;height:16px" viewBox="0 0 16 16" ><circle cx="4" cy="5" r="1.8" fill="#2f7de0" stroke="#154a9a" stroke-width="0.5"/><circle cx="3.46" cy="4.37" r="0.72" fill="#a8d4ff"/><circle cx="10.5" cy="3.5" r="1.8" fill="#2f7de0" stroke="#154a9a" stroke-width="0.5"/><circle cx="9.96" cy="2.87" r="0.72" fill="#a8d4ff"/><circle cx="11" cy="11" r="1.8" fill="#2f7de0" stroke="#154a9a" stroke-width="0.5"/><circle cx="10.46" cy="10.37" r="0.72" fill="#a8d4ff"/></svg>
<svg class="ico" style="left:5.800000000000001px;top:241.0px;width:16px;height:16px" viewBox="0 0 16 16" ><path d="M2 14L14 2" stroke="#555" stroke-width="1.400"/><path d="M8 8l3 2.500" stroke="#555" stroke-width="1.200"/><circle cx="2.2" cy="13.8" r="1.7" fill="#2f7de0" stroke="#154a9a" stroke-width="0.5"/><circle cx="1.69" cy="13.21" r="0.68" fill="#a8d4ff"/><circle cx="13.8" cy="2.2" r="1.7" fill="#2f7de0" stroke="#154a9a" stroke-width="0.5"/><circle cx="13.29" cy="1.61" r="0.68" fill="#a8d4ff"/></svg>
<div class="sel" style="left:2px;top:261px;width:25px;height:24px"></div>
<svg class="ico" style="left:5.800000000000001px;top:265.0px;width:16px;height:16px" viewBox="0 0 16 16" ><rect x="3" y="3" width="10" height="10" fill="#f4f4f4" stroke="#555" stroke-width="1.200"/><path d="M8 3v2M8 13v-2M3 8h2M13 8h-2" stroke="#555" stroke-width="1"/><circle cx="3" cy="3" r="1.7" fill="#2f7de0" stroke="#154a9a" stroke-width="0.5"/><circle cx="2.49" cy="2.41" r="0.68" fill="#a8d4ff"/><circle cx="13" cy="3" r="1.7" fill="#2f7de0" stroke="#154a9a" stroke-width="0.5"/><circle cx="12.49" cy="2.41" r="0.68" fill="#a8d4ff"/><circle cx="3" cy="13" r="1.7" fill="#2f7de0" stroke="#154a9a" stroke-width="0.5"/><circle cx="2.49" cy="12.40" r="0.68" fill="#a8d4ff"/><circle cx="13" cy="13" r="1.7" fill="#2f7de0" stroke="#154a9a" stroke-width="0.5"/><circle cx="12.49" cy="12.40" r="0.68" fill="#a8d4ff"/></svg>
<svg class="ico" style="left:5.800000000000001px;top:289.0px;width:16px;height:16px" viewBox="0 0 16 16" ><circle cx="8" cy="8" r="7" fill="#2f86e8" stroke="#1858b8" stroke-width=".7"/><ellipse cx="6.500" cy="5" rx="3.600" ry="2.400" fill="#8cc4ff" opacity=".8"/><path d="M12 4L7 9" stroke="#000" stroke-width="2"/><path d="M3.800 12.200l1.400-5.400 4 4z" fill="#000"/></svg>
<svg class="ico" style="left:5.800000000000001px;top:313.0px;width:16px;height:16px" viewBox="0 0 16 16" ><rect x="3" y="3" width="10" height="10" fill="#f4f4f4" stroke="#555" stroke-width="1.200"/><circle cx="13" cy="3" r="1.7" fill="#2f7de0" stroke="#154a9a" stroke-width="0.5"/><circle cx="12.49" cy="2.41" r="0.68" fill="#a8d4ff"/><circle cx="3" cy="13" r="1.7" fill="#2f7de0" stroke="#154a9a" stroke-width="0.5"/><circle cx="2.49" cy="12.40" r="0.68" fill="#a8d4ff"/><circle cx="13" cy="13" r="1.7" fill="#2f7de0" stroke="#154a9a" stroke-width="0.5"/><circle cx="12.49" cy="12.40" r="0.68" fill="#a8d4ff"/><path d="M3.500 .2l.9 2 2.100-.6-.9 1.900 1.800 1.200-2.100.5.200 2.200-1.700-1.400-1.700 1.400.200-2.200L.2 4.700 2 3.500l-.9-1.900 2.100.6z" fill="#ffe818" stroke="#e8b800" stroke-width=".5"/></svg>
<svg class="ico" style="left:5.800000000000001px;top:337.0px;width:16px;height:16px" viewBox="0 0 16 16" ><path d="M2 2.500h7.500L14.500 8v6.500H2z" fill="#fdfdfd" stroke="#555" stroke-width="1"/><path d="M2 14.500L9.500 2.500M2 14.500L14.500 8" stroke="#555" stroke-width=".9"/></svg>
<svg class="ico" style="left:5.800000000000001px;top:361.0px;width:16px;height:16px" viewBox="0 0 16 16" ><path d="M5.500 1C2 1 1 4 1.500 7c.4 2.500 2 3.500 2 6 0 1.500 1.500 2.500 3 2 2-.7 1.500-3 3-4.500C11 9 10.500 1 5.500 1z" fill="#f0c090" stroke="#c08850" stroke-width=".9"/><path d="M4 5c.5-2 3.500-2 4 .5.300 1.500-1.500 2-1.500 4" fill="none" stroke="#c08850" stroke-width=".9"/><path d="M11.500 4.500c1.500 2 1.500 5 0 7M13.500 3c2.200 3 2.200 7 0 10" fill="none" stroke="#666" stroke-width="1"/></svg>
<svg class="ico" style="left:5.800000000000001px;top:385.0px;width:16px;height:16px" viewBox="0 0 16 16" ><rect x=".5" y=".5" width="15" height="15" fill="#000" stroke="#e01010" stroke-width="1.600"/><path d="M3 3.500h3v2H4.500v5H6v2H3zM13 3.500h-3v2h1.500v5H10v2h3z" fill="#e87830"/><rect x="7.300" y="5" width="1.400" height="6" fill="#e8c020"/><rect x="1.300" y="12.500" width="2" height="2" fill="#e020e0"/><rect x="12.700" y="12.500" width="2" height="2" fill="#e8d820"/></svg>
<div class="hsep" style="left:5px;top:411px;width:20px"></div>
<svg class="ico" style="left:5.800000000000001px;top:422.0px;width:16px;height:16px" viewBox="0 0 16 16" ><path d="M8 .5l6.500 3v8L8 15.500 1.500 11.500v-8z" fill="#3a8ae0" stroke="#1c5cb0" stroke-width=".7"/><path d="M8 .5l6.500 3L8 7 1.500 3.500z" fill="#8cc8ff"/><text x="8.300" y="13.800" font-family="Liberation Sans,sans-serif" font-weight="bold" font-size="9" fill="#fff" stroke="#123" stroke-width=".6" paint-order="stroke" text-anchor="middle" letter-spacing="-.5">GZ</text></svg>
<div class="hsep" style="left:5px;top:448px;width:20px"></div>
<svg class="ico" style="left:5.800000000000001px;top:456.0px;width:16px;height:16px" viewBox="0 0 16 16" ><path d="M0 15L5.500 4l3 5 2-3.500L16 15z" fill="#3a4a9a"/><path d="M8 1v14M6 6l2-5 2 5" stroke="#d04878" stroke-width=".8" fill="none"/><path d="M0 15l5.500-11 1 2-3 9z" fill="#6a7ac8"/></svg>
<svg class="ico" style="left:5.800000000000001px;top:478.0px;width:16px;height:16px" viewBox="0 0 16 16" ><circle cx="2.5" cy="2.5" r="1.6" fill="#2f7de0" stroke="#154a9a" stroke-width="0.5"/><circle cx="2.02" cy="1.94" r="0.64" fill="#a8d4ff"/><circle cx="2.5" cy="8" r="1.6" fill="#2f7de0" stroke="#154a9a" stroke-width="0.5"/><circle cx="2.02" cy="7.44" r="0.64" fill="#a8d4ff"/><circle cx="2.5" cy="13.5" r="1.6" fill="#2f7de0" stroke="#154a9a" stroke-width="0.5"/><circle cx="2.02" cy="12.94" r="0.64" fill="#a8d4ff"/><circle cx="8" cy="13.5" r="1.6" fill="#2f7de0" stroke="#154a9a" stroke-width="0.5"/><circle cx="7.52" cy="12.94" r="0.64" fill="#a8d4ff"/><circle cx="8" cy="2.5" r="1.6" fill="#e03030" stroke="#901010" stroke-width="0.5"/><circle cx="7.52" cy="1.94" r="0.64" fill="#ffb0b0"/><circle cx="13.5" cy="2.5" r="1.6" fill="#e03030" stroke="#901010" stroke-width="0.5"/><circle cx="13.02" cy="1.94" r="0.64" fill="#ffb0b0"/><circle cx="13.5" cy="8" r="1.6" fill="#e03030" stroke="#901010" stroke-width="0.5"/><circle cx="13.02" cy="7.44" r="0.64" fill="#ffb0b0"/><circle cx="13.5" cy="13.5" r="1.6" fill="#e03030" stroke="#901010" stroke-width="0.5"/><circle cx="13.02" cy="12.94" r="0.64" fill="#ffb0b0"/><path d="M5 8h5M8.500 5.800L11 8l-2.500 2.200" stroke="#1a9a2a" stroke-width="1.500" fill="none"/></svg>
<svg class="ico" style="left:5.800000000000001px;top:502.0px;width:16px;height:16px" viewBox="0 0 16 16" ><rect x="2.500" y="2.500" width="11" height="11" fill="#f0c890" stroke="#c8a068" stroke-width=".8"/><circle cx="2.5" cy="2.5" r="1.400" fill="#222"/><circle cx="13.5" cy="2.5" r="1.400" fill="#222"/><circle cx="2.5" cy="13.5" r="1.400" fill="#222"/><circle cx="13.5" cy="13.5" r="1.400" fill="#222"/></svg>
<svg class="ico" style="left:5.800000000000001px;top:525.0px;width:16px;height:16px" viewBox="0 0 16 16" ><path d="M3 5h4l2 3 4-5 1 5-4 6H3z" fill="#f0c890" stroke="#d02010" stroke-width="1.300"/><circle cx="3" cy="5" r="1.5" fill="#f59a16" stroke="#b35a00" stroke-width="0.5"/><circle cx="2.55" cy="4.47" r="0.60" fill="#ffe08a"/><circle cx="7" cy="5" r="1.5" fill="#f59a16" stroke="#b35a00" stroke-width="0.5"/><circle cx="6.55" cy="4.47" r="0.60" fill="#ffe08a"/><circle cx="9" cy="8" r="1.5" fill="#f59a16" stroke="#b35a00" stroke-width="0.5"/><circle cx="8.55" cy="7.47" r="0.60" fill="#ffe08a"/><circle cx="13" cy="3" r="1.5" fill="#f59a16" stroke="#b35a00" stroke-width="0.5"/><circle cx="12.55" cy="2.48" r="0.60" fill="#ffe08a"/><circle cx="14" cy="8" r="1.5" fill="#f59a16" stroke="#b35a00" stroke-width="0.5"/><circle cx="13.55" cy="7.47" r="0.60" fill="#ffe08a"/><circle cx="10" cy="14" r="1.5" fill="#f59a16" stroke="#b35a00" stroke-width="0.5"/><circle cx="9.55" cy="13.47" r="0.60" fill="#ffe08a"/><circle cx="3" cy="14" r="1.5" fill="#f59a16" stroke="#b35a00" stroke-width="0.5"/><circle cx="2.55" cy="13.47" r="0.60" fill="#ffe08a"/></svg>
<div class="hsep" style="left:5px;top:551px;width:20px"></div>
<svg class="ico" style="left:5.800000000000001px;top:561.0px;width:16px;height:16px" viewBox="0 0 16 16" ><path d="M9.500 9.500L2 15" stroke="#3c64b4" stroke-width="2.400" stroke-linecap="round"/><circle cx="10" cy="6" r="4.800" fill="#e8f4ff" stroke="#8a9ab8" stroke-width="1.400"/><path d="M7 5a3.500 3.500 0 013-2.500" stroke="#fff" stroke-width="1.200" fill="none"/></svg>
<svg class="ico" style="left:5.800000000000001px;top:585.0px;width:16px;height:16px" viewBox="0 0 16 16" ><path d="M1.500 9l2-2 3 3L14 2l1.500 2-9 10z" fill="#2b72d9" stroke="#1850a8" stroke-width=".5"/></svg>
<svg class="ico" style="left:5.800000000000001px;top:608.0px;width:16px;height:16px" viewBox="0 0 16 16" ><circle cx="8" cy="8" r="7.200" fill="#2a2a2a" stroke="#555" stroke-width=".8"/><circle cx="8" cy="8" r="5.200" fill="#1a3a1a" stroke="#3a8a3a" stroke-width="1"/><path d="M8 9l3-4.500" stroke="#e83020" stroke-width="1.300"/><path d="M3.500 11.500a5.500 5.500 0 011-7" fill="none" stroke="#e8c020" stroke-width="1.200"/></svg>
<svg class="ico" style="left:5.800000000000001px;top:632.0px;width:16px;height:16px" viewBox="0 0 16 16" ><rect x="1" y="1" width="14" height="14" fill="#fff" stroke="#333" stroke-width="1.200"/><path d="M1.500 1.500h13L8 8z" fill="#2040d8"/><path d="M14.500 1.500v13h-9z" fill="#28b838"/><path d="M1.500 1.500L8 8l-2.500 6.500h-4z" fill="#e02020"/></svg>
<div id="mapframe"></div>
<svg id="map" viewBox="32 74 1538 655">
<defs>
<linearGradient id="gCompTop" x1="0" y1="0" x2="0" y2="1"><stop offset="0" stop-color="#8c8c8c"/><stop offset=".35" stop-color="#c4c4c4"/><stop offset="1" stop-color="#b4b4b4"/></linearGradient>
<pattern id="pComp" patternUnits="userSpaceOnUse" x="627" y="109" width="43.32" height="43.32"><rect width="43.32" height="43.32" fill="#b9b9b9"/><rect width="43.32" height="13.54" fill="url(#gCompTop)"/><rect x="0.00" y="0" width="2.03" height="32.49" fill="#fff" opacity=".08"/><rect x="5.42" y="0" width="2.03" height="32.49" fill="#fff" opacity=".08"/><rect x="10.83" y="0" width="2.03" height="32.49" fill="#fff" opacity=".08"/><rect x="16.25" y="0" width="2.03" height="32.49" fill="#fff" opacity=".08"/><rect x="21.66" y="0" width="2.03" height="32.49" fill="#fff" opacity=".08"/><rect x="27.07" y="0" width="2.03" height="32.49" fill="#fff" opacity=".08"/><rect x="32.49" y="0" width="2.03" height="32.49" fill="#fff" opacity=".08"/><rect x="37.91" y="0" width="2.03" height="32.49" fill="#fff" opacity=".08"/><rect x="0" y="31.81" width="43.32" height="11.51" fill="#4c4c4c"/><rect x="0" y="31.81" width="43.32" height="1.02" fill="#7a7a7a"/><rect x="13.54" y="14.21" width="19.63" height="15.57" fill="#8e8e8e"/><rect x="14.55" y="15.57" width="17.60" height="13.54" fill="#10180f"/><rect x="15.57" y="16.92" width="6.77" height="1.35" fill="#2a4a24"/><rect x="24.37" y="20.31" width="6.09" height="2.71" fill="#24401f"/><rect x="15.57" y="23.69" width="5.42" height="4.06" fill="#1e3a1a"/><rect x="25.72" y="24.37" width="5.42" height="3.38" fill="#6a6a6a"/><rect x="4.06" y="14.21" width="7.45" height="15.57" fill="#8a8a8a"/><rect x="5.42" y="14.89" width="4.06" height="5.42" fill="#b4803c"/><rect x="4.74" y="20.98" width="6.09" height="2.71" fill="#777"/><rect x="5.42" y="24.71" width="5.42" height="1.69" fill="#4c8c3c"/><rect x="5.42" y="27.75" width="5.42" height="1.35" fill="#4c8c3c"/><rect x="34.52" y="14.21" width="4.74" height="5.42" fill="#7c7c7c"/><rect x="34.52" y="20.31" width="4.74" height="4.06" fill="#1414d0"/><rect x="34.52" y="25.38" width="4.74" height="4.06" fill="#2c5c24"/><rect x="6.77" y="35.87" width="4.74" height="1.22" fill="#1010a8"/><rect x="31.81" y="35.87" width="5.42" height="1.22" fill="#1010a8"/><rect x="6.77" y="39.94" width="4.74" height="1.22" fill="#1010a8"/><rect x="31.81" y="39.94" width="5.42" height="1.22" fill="#1010a8"/></pattern>
<pattern id="pTile" patternUnits="userSpaceOnUse" x="64.58" y="109.08" width="5.415" height="5.415"><rect width="5.415" height="5.415" fill="#5e5e5e"/><path d="M0 .6H5.415M.6 0V5.415" stroke="#424242" stroke-width="1.300"/><path d="M1.300 4.915H5.415M4.915 1.300V5.415" stroke="#4c4c4c" stroke-width="1"/></pattern>
<filter id="fNoise" x="0" y="0" width="100%" height="100%" color-interpolation-filters="sRGB"><feTurbulence type="fractalNoise" baseFrequency="0.11 0.16" numOctaves="3" seed="11"/><feColorMatrix type="matrix" values="0 0 0 0 0.36  0 0 0 0 0.31  0 0 0 0 0.24  0.55 0.25 0 0 -0.31"/></filter>
<pattern id="pBrown" patternUnits="userSpaceOnUse" x="64.58" y="109.08" width="43.32" height="43.32"><rect width="43.32" height="43.32" fill="#2d2620"/></pattern>
<pattern id="pConc" patternUnits="userSpaceOnUse" x="64.58" y="109.08" width="43.32" height="43.32"><rect width="43.32" height="43.32" fill="#6c6c6c"/><rect x="0.0" y="0" width="1.2" height="43.32" fill="#5c5c5c" opacity=".5"/><rect x="5.3" y="0" width="1.2" height="43.32" fill="#7a7a7a" opacity=".5"/><rect x="10.6" y="0" width="1.2" height="43.32" fill="#606060" opacity=".5"/><rect x="15.9" y="0" width="1.2" height="43.32" fill="#777" opacity=".5"/><rect x="21.2" y="0" width="1.2" height="43.32" fill="#5a5a5a" opacity=".5"/><rect x="26.5" y="0" width="1.2" height="43.32" fill="#7c7c7c" opacity=".5"/><rect x="31.8" y="0" width="1.2" height="43.32" fill="#646464" opacity=".5"/><rect x="37.1" y="0" width="1.2" height="43.32" fill="#747474" opacity=".5"/></pattern>
<radialGradient id="gPillar" cx=".5" cy=".5" r=".45"><stop offset="0" stop-color="#0e0f52"/><stop offset=".45" stop-color="#0b0c3c"/><stop offset="1" stop-color="#06071c"/></radialGradient>
</defs>
<path d="M541.5 152.5 L1017.5 152.5 L1060.5 163.5 L1093.5 184.5 L1115.5 217.5 L1125.5 260.5 L1125.5 520.5 L476.5 520.5 L476.5 217.5 L497.5 174.5Z" fill="#28211c"/>
<path d="M627.5 163.5 L974.5 163.5 L979.5 174.5 L622.5 174.5Z" fill="#6c5d49"/>
<path d="M622.5 174.5 L979.5 174.5 L985.5 184.5 L616.5 184.5Z" fill="#5c4e3d"/>
<path d="M616.5 184.5 L985.5 184.5 L990.5 195.5 L611.5 195.5Z" fill="#493f32"/>
<path d="M611.5 195.5 L990.5 195.5 L995.5 206.5 L606.5 206.5Z" fill="#3b3229"/>
<clipPath id="cBrown"><path d="M541.5 152.5 L1017.5 152.5 L1060.5 163.5 L1093.5 184.5 L1115.5 217.5 L1125.5 260.5 L1125.5 520.5 L476.5 520.5 L476.5 217.5 L497.5 174.5Z"/></clipPath>
<g clip-path="url(#cBrown)"><rect x="476" y="152" width="650" height="369" filter="url(#fNoise)"/></g>
<rect x="627" y="109" width="348" height="44" fill="url(#pComp)"/>
<path d="M562.5 304.5 L736.5 304.5 L736.5 390.5 L649.5 390.5 L649.5 520.5 L562.5 520.5Z" fill="#06071c"/>
<path d="M736.5 304.5 L779.5 260.5 L822.5 260.5 L844.5 239.5 L909.5 239.5 L930.5 260.5 L974.5 260.5 L1017.5 304.5 L1017.5 390.5 L974.5 433.5 L930.5 433.5 L909.5 455.5 L844.5 455.5 L822.5 433.5 L779.5 433.5 L736.5 390.5Z" fill="#06071c"/>
<path d="M801.5 304.5 L822.5 282.5 L930.5 282.5 L952.5 304.5 L930.5 325.5 L822.5 325.5Z" fill="url(#pConc)"/>
<path d="M801.5 390.5 L822.5 369.5 L930.5 369.5 L952.5 390.5 L930.5 412.5 L822.5 412.5Z" fill="url(#pConc)"/>
<path d="M779.5 325.5 L779.5 369.5 L801.5 390.5 L822.5 369.5 L930.5 369.5 L952.5 390.5 L974.5 369.5 L974.5 325.5 L952.5 304.5 L930.5 325.5 L822.5 325.5 L801.5 304.5Z" fill="#000"/>
<rect x="584.5" y="325.5" width="43.0" height="44.0" fill="url(#gPillar)"/>
<rect x="671.5" y="325.5" width="43.0" height="44.0" fill="url(#gPillar)"/>
<rect x="584.5" y="412.5" width="43.0" height="43.0" fill="url(#gPillar)"/>
<rect x="476" y="520" width="261" height="174" fill="url(#pTile)"/>
<rect x="551" y="520" width="12" height="12" fill="#000"/>
<rect x="649" y="520" width="12" height="12" fill="#000"/>
<g transform="translate(844.5 304.5)"><rect x="-13.300" y="-13.500" width="26.700" height="27" fill="#5676c8" fill-opacity=".55"/><rect x="-10.300" y="-8.100" width="21.400" height="17.200" fill="#737373"/><rect x="-10.300" y="-8.100" width="21.400" height="3.800" fill="#898989"/><path d="M-9 4.300H9M-9.500 8.300H10" stroke="#94744c" stroke-width=".8" opacity=".8"/><path d="M-7 1.500h2" stroke="#c8c8c8" stroke-width="1"/><path d="M3 4.300h4" stroke="#4a4a4a" stroke-width="1"/><path d="M-1.800 -2h1.600v-1.600h1.700v1.600h1.500v1.700h-1.500v1.600h-1.700v-1.600h-1.600z" fill="#b03838" opacity=".9"/></g>
<g transform="translate(844.5 390.5)"><rect x="-13.300" y="-13.400" width="26.700" height="26.800" fill="#a58728" fill-opacity=".66"/><rect x="-11" y="-7.300" width="23.400" height="13.700" fill="#4b6a49"/><rect x="-10" y="-7.300" width="21" height="2.800" fill="#6c7c6a"/><text x="0.500" y="3.400" font-family="Liberation Sans,sans-serif" font-size="6" font-weight="bold" fill="#c08068" text-anchor="middle" opacity=".85" textLength="13" lengthAdjust="spacingAndGlyphs">SHOO</text></g>
<g transform="translate(909.5 304.5)"><rect x="-13.300" y="-13.500" width="26.700" height="27" fill="#5676c8" fill-opacity=".55"/><rect x="-10.300" y="-8.100" width="21.400" height="17.200" fill="#737373"/><rect x="-10.300" y="-8.100" width="21.400" height="3.800" fill="#898989"/><path d="M-9 4.300H9M-9.500 8.300H10" stroke="#94744c" stroke-width=".8" opacity=".8"/><path d="M-7 1.500h2" stroke="#c8c8c8" stroke-width="1"/><path d="M3 4.300h4" stroke="#4a4a4a" stroke-width="1"/><path d="M-1.800 -2h1.600v-1.600h1.700v1.600h1.500v1.700h-1.500v1.600h-1.700v-1.600h-1.600z" fill="#b03838" opacity=".9"/></g>
<g transform="translate(909.5 390.5)"><rect x="-13.300" y="-13.400" width="26.700" height="26.800" fill="#a58728" fill-opacity=".66"/><rect x="-11" y="-7.300" width="23.400" height="13.700" fill="#4b6a49"/><rect x="-10" y="-7.300" width="21" height="2.800" fill="#6c7c6a"/><text x="0.500" y="3.400" font-family="Liberation Sans,sans-serif" font-size="6" font-weight="bold" fill="#c08068" text-anchor="middle" opacity=".85" textLength="13" lengthAdjust="spacingAndGlyphs">SHOO</text></g>
<g fill="none" stroke-width="1" stroke-dasharray="1 1" shape-rendering="crispEdges">
<path stroke="#464646" d="M42.5 76V727M53.5 75V727M75.5 75V727M86.5 76V727M97.5 75V727M118.5 76V727M129.5 75V727M140.5 76V727M162.5 76V727M172.5 76V727M183.5 75V727M205.5 75V727M216.5 76V727M227.5 75V727M248.5 76V727M259.5 75V727M270.5 76V727M292.5 76V727M302.5 76V727M313.5 75V727M335.5 75V727M346.5 76V727M356.5 76V727M378.5 76V727M389.5 75V727M400.5 76V727M421.5 75V727M432.5 76V727M443.5 75V727M465.5 75V727M476.5 76V727M486.5 76V727M508.5 76V727M519.5 75V727M530.5 76V727M551.5 75V727M562.5 76V727M573.5 75V727M595.5 75V727M606.5 76V727M616.5 76V727M638.5 76V727M649.5 75V727M660.5 76V727M681.5 75V727M692.5 76V727M703.5 75V727M725.5 75V727M736.5 76V727M746.5 76V727M768.5 76V727M779.5 75V727M790.5 76V727M811.5 75V727M822.5 76V727M833.5 75V727M855.5 75V727M866.5 76V727M876.5 76V727M898.5 76V727M909.5 75V727M920.5 76V727M941.5 75V727M952.5 76V727M963.5 75V727M985.5 75V727M995.5 75V727M1006.5 76V727M1028.5 76V727M1039.5 75V727M1050.5 76V727M1071.5 75V727M1082.5 76V727M1093.5 75V727M1115.5 75V727M1125.5 75V727M1136.5 76V727M1158.5 76V727M1169.5 75V727M1180.5 76V727M1201.5 75V727M1212.5 76V727M1223.5 75V727M1245.5 75V727M1255.5 75V727M1266.5 76V727M1288.5 76V727M1299.5 75V727M1310.5 76V727M1331.5 75V727M1342.5 76V727M1353.5 75V727M1375.5 75V727M1385.5 75V727M1396.5 76V727M1418.5 76V727M1429.5 75V727M1439.5 75V727M1461.5 75V727M1472.5 76V727M1483.5 75V727M1504.5 76V727M1515.5 75V727M1526.5 76V727M1548.5 76V727M1559.5 75V727M34 76.5H1568M33 87.5H1568M34 98.5H1568M33 119.5H1568M34 130.5H1568M33 141.5H1568M33 163.5H1568M34 174.5H1568M34 184.5H1568M34 206.5H1568M33 217.5H1568M34 228.5H1568M33 249.5H1568M34 260.5H1568M33 271.5H1568M33 293.5H1568M34 304.5H1568M34 314.5H1568M34 336.5H1568M33 347.5H1568M34 358.5H1568M33 379.5H1568M34 390.5H1568M33 401.5H1568M33 423.5H1568M33 433.5H1568M34 444.5H1568M34 466.5H1568M33 477.5H1568M34 488.5H1568M33 509.5H1568M34 520.5H1568M33 531.5H1568M33 553.5H1568M33 563.5H1568M34 574.5H1568M34 596.5H1568M33 607.5H1568M34 618.5H1568M33 639.5H1568M34 650.5H1568M33 661.5H1568M33 683.5H1568M33 693.5H1568M34 704.5H1568M34 726.5H1568"/>
<path stroke="#39596f" d="M64.5 76V727M107.5 75V727M151.5 75V727M194.5 76V727M237.5 75V727M281.5 75V727M324.5 76V727M367.5 75V727M411.5 75V727M454.5 76V727M497.5 75V727M541.5 75V727M584.5 76V727M627.5 75V727M671.5 75V727M714.5 76V727M757.5 75V727M801.5 75V727M844.5 76V727M887.5 75V727M930.5 76V727M974.5 76V727M1017.5 75V727M1060.5 76V727M1104.5 76V727M1147.5 75V727M1190.5 76V727M1234.5 76V727M1277.5 75V727M1320.5 76V727M1364.5 76V727M1407.5 75V727M1450.5 76V727M1494.5 76V727M1537.5 75V727M33 109.5H1568M34 152.5H1568M33 195.5H1568M33 239.5H1568M34 282.5H1568M33 325.5H1568M33 369.5H1568M34 412.5H1568M33 455.5H1568M34 498.5H1568M34 542.5H1568M33 585.5H1568M34 628.5H1568M34 672.5H1568M33 715.5H1568"/>
</g>
<path d="M627.5 152.5L974.5 152.5M476.5 282.5L519.5 282.5M519.5 282.5L584.5 217.5M584.5 217.5L1017.5 217.5M1017.5 217.5L1082.5 282.5M1082.5 282.5L1125.5 282.5M627.5 163.5L974.5 163.5M622.5 174.5L627.5 163.5M974.5 163.5L979.5 174.5M622.5 174.5L979.5 174.5M616.5 184.5L622.5 174.5M979.5 174.5L985.5 184.5M616.5 184.5L985.5 184.5M611.5 195.5L616.5 184.5M985.5 184.5L990.5 195.5M611.5 195.5L990.5 195.5M606.5 206.5L611.5 195.5M990.5 195.5L995.5 206.5M606.5 206.5L995.5 206.5M562.5 304.5L736.5 304.5M736.5 390.5L649.5 390.5M649.5 390.5L649.5 520.5M562.5 520.5L562.5 304.5M736.5 304.5L779.5 260.5M779.5 260.5L822.5 260.5M822.5 260.5L844.5 239.5M844.5 239.5L909.5 239.5M909.5 239.5L930.5 260.5M930.5 260.5L974.5 260.5M974.5 260.5L1017.5 304.5M1017.5 304.5L1017.5 390.5M1017.5 390.5L974.5 433.5M974.5 433.5L930.5 433.5M930.5 433.5L909.5 455.5M909.5 455.5L844.5 455.5M844.5 455.5L822.5 433.5M822.5 433.5L779.5 433.5M779.5 433.5L736.5 390.5M822.5 282.5L801.5 304.5M930.5 282.5L822.5 282.5M952.5 304.5L930.5 282.5M930.5 412.5L952.5 390.5M822.5 412.5L930.5 412.5M801.5 390.5L822.5 412.5M573.5 325.5L573.5 369.5M573.5 369.5L584.5 379.5M584.5 379.5L627.5 379.5M627.5 379.5L638.5 369.5M638.5 369.5L638.5 325.5M638.5 325.5L627.5 314.5M627.5 314.5L584.5 314.5M584.5 314.5L573.5 325.5M584.5 325.5L627.5 325.5M627.5 325.5L627.5 369.5M627.5 369.5L584.5 369.5M584.5 369.5L584.5 325.5M660.5 325.5L660.5 369.5M660.5 369.5L671.5 379.5M671.5 379.5L714.5 379.5M714.5 379.5L725.5 369.5M725.5 369.5L725.5 325.5M725.5 325.5L714.5 314.5M714.5 314.5L671.5 314.5M671.5 314.5L660.5 325.5M671.5 325.5L714.5 325.5M714.5 325.5L714.5 369.5M714.5 369.5L671.5 369.5M671.5 369.5L671.5 325.5M573.5 412.5L573.5 455.5M573.5 455.5L584.5 466.5M584.5 466.5L627.5 466.5M627.5 466.5L638.5 455.5M638.5 455.5L638.5 412.5M638.5 412.5L627.5 401.5M627.5 401.5L584.5 401.5M584.5 401.5L573.5 412.5M584.5 412.5L627.5 412.5M627.5 412.5L627.5 455.5M627.5 455.5L584.5 455.5M584.5 455.5L584.5 412.5M649.5 520.5L562.5 520.5M730.5 526.5L730.5 666.5M730.5 666.5L725.5 683.5M725.5 683.5L708.5 688.5M708.5 688.5L503.5 688.5M503.5 688.5L486.5 683.5M486.5 683.5L481.5 666.5M481.5 666.5L481.5 526.5M476.5 520.5L481.5 526.5M736.5 520.5L730.5 526.5M562.5 563.5L562.5 607.5M562.5 607.5L649.5 607.5M649.5 607.5L649.5 563.5M649.5 563.5L562.5 563.5M568.5 569.5L643.5 569.5M643.5 569.5L643.5 601.5M643.5 601.5L568.5 601.5M568.5 601.5L568.5 569.5M801.5 152.5L801.5 158.0M498.5 282.5L498.5 288.0M552.0 250.0L555.9 253.9M801.5 217.5L801.5 223.0M1050.0 250.0L1046.1 253.9M1104.5 282.5L1104.5 288.0M801.5 163.5L801.5 169.0M625.0 169.0L630.0 171.3M977.0 169.0L972.0 171.3M801.5 174.5L801.5 180.0M619.5 179.5L624.2 182.3M982.5 179.5L977.8 182.3M801.5 184.5L801.5 190.0M614.0 190.0L619.0 192.3M988.0 190.0L983.0 192.3M801.5 195.5L801.5 201.0M609.0 201.0L614.0 203.3M993.0 201.0L988.0 203.3M801.5 206.5L801.5 212.0M649.5 304.5L649.5 310.0M693.5 390.5L693.5 385.0M649.5 455.5L644.0 455.5M562.5 412.5L568.0 412.5M758.0 282.5L761.9 286.3M801.5 260.5L801.5 266.0M833.5 250.0L837.3 254.0M877.5 239.5L877.5 245.0M920.0 250.0L916.1 253.9M952.5 260.5L952.5 266.0M996.0 282.5L992.1 286.3M1017.5 347.5L1012.0 347.5M996.0 412.0L992.1 408.1M952.5 433.5L952.5 428.0M920.0 444.5L916.0 440.7M877.5 455.5L877.5 450.0M833.5 444.5L837.4 440.6M801.5 433.5L801.5 428.0M758.0 412.0L761.9 408.1M812.0 293.5L808.0 289.7M876.5 282.5L876.5 277.0M941.5 293.5L945.4 289.6M941.5 401.5L945.4 405.4M876.5 412.5L876.5 418.0M812.0 401.5L808.0 405.3M573.5 347.5L568.0 347.5M579.0 374.5L575.3 378.6M606.5 379.5L606.5 385.0M633.0 374.5L636.7 378.6M638.5 347.5L644.0 347.5M633.0 320.0L636.9 316.1M606.5 314.5L606.5 309.0M579.0 320.0L575.1 316.1M606.5 325.5L606.5 331.0M627.5 347.5L622.0 347.5M606.5 369.5L606.5 364.0M584.5 347.5L590.0 347.5M660.5 347.5L655.0 347.5M666.0 374.5L662.3 378.6M693.5 379.5L693.5 385.0M720.0 374.5L723.7 378.6M725.5 347.5L731.0 347.5M720.0 320.0L723.9 316.1M693.5 314.5L693.5 309.0M666.0 320.0L662.1 316.1M693.5 325.5L693.5 331.0M714.5 347.5L709.0 347.5M693.5 369.5L693.5 364.0M671.5 347.5L677.0 347.5M573.5 434.5L568.0 434.5M579.0 461.0L575.1 464.9M606.5 466.5L606.5 472.0M633.0 461.0L636.9 464.9M638.5 434.5L644.0 434.5M633.0 407.0L636.9 403.1M606.5 401.5L606.5 396.0M579.0 407.0L575.1 403.1M606.5 412.5L606.5 418.0M627.5 434.5L622.0 434.5M606.5 455.5L606.5 450.0M584.5 434.5L590.0 434.5M606.5 520.5L606.5 515.0M730.5 596.5L725.0 596.5M728.0 675.0L722.7 673.4M717.0 686.0L715.4 680.7M606.5 688.5L606.5 683.0M495.0 686.0L496.6 680.7M484.0 675.0L489.3 673.4M481.5 596.5L487.0 596.5M562.5 585.5L557.0 585.5M606.5 607.5L606.5 613.0M649.5 585.5L655.0 585.5M606.5 563.5L606.5 558.0M606.5 569.5L606.5 575.0M643.5 585.5L638.0 585.5M606.5 601.5L606.5 596.0M568.5 585.5L574.0 585.5" fill="none" stroke="#fff" stroke-opacity=".7" stroke-width="1"/>
<g opacity=".3"><g fill="none" stroke-width="1" stroke-dasharray="1 1" shape-rendering="crispEdges">
<path stroke="#464646" d="M42.5 76V727M53.5 75V727M75.5 75V727M86.5 76V727M97.5 75V727M118.5 76V727M129.5 75V727M140.5 76V727M162.5 76V727M172.5 76V727M183.5 75V727M205.5 75V727M216.5 76V727M227.5 75V727M248.5 76V727M259.5 75V727M270.5 76V727M292.5 76V727M302.5 76V727M313.5 75V727M335.5 75V727M346.5 76V727M356.5 76V727M378.5 76V727M389.5 75V727M400.5 76V727M421.5 75V727M432.5 76V727M443.5 75V727M465.5 75V727M476.5 76V727M486.5 76V727M508.5 76V727M519.5 75V727M530.5 76V727M551.5 75V727M562.5 76V727M573.5 75V727M595.5 75V727M606.5 76V727M616.5 76V727M638.5 76V727M649.5 75V727M660.5 76V727M681.5 75V727M692.5 76V727M703.5 75V727M725.5 75V727M736.5 76V727M746.5 76V727M768.5 76V727M779.5 75V727M790.5 76V727M811.5 75V727M822.5 76V727M833.5 75V727M855.5 75V727M866.5 76V727M876.5 76V727M898.5 76V727M909.5 75V727M920.5 76V727M941.5 75V727M952.5 76V727M963.5 75V727M985.5 75V727M995.5 75V727M1006.5 76V727M1028.5 76V727M1039.5 75V727M1050.5 76V727M1071.5 75V727M1082.5 76V727M1093.5 75V727M1115.5 75V727M1125.5 75V727M1136.5 76V727M1158.5 76V727M1169.5 75V727M1180.5 76V727M1201.5 75V727M1212.5 76V727M1223.5 75V727M1245.5 75V727M1255.5 75V727M1266.5 76V727M1288.5 76V727M1299.5 75V727M1310.5 76V727M1331.5 75V727M1342.5 76V727M1353.5 75V727M1375.5 75V727M1385.5 75V727M1396.5 76V727M1418.5 76V727M1429.5 75V727M1439.5 75V727M1461.5 75V727M1472.5 76V727M1483.5 75V727M1504.5 76V727M1515.5 75V727M1526.5 76V727M1548.5 76V727M1559.5 75V727M34 76.5H1568M33 87.5H1568M34 98.5H1568M33 119.5H1568M34 130.5H1568M33 141.5H1568M33 163.5H1568M34 174.5H1568M34 184.5H1568M34 206.5H1568M33 217.5H1568M34 228.5H1568M33 249.5H1568M34 260.5H1568M33 271.5H1568M33 293.5H1568M34 304.5H1568M34 314.5H1568M34 336.5H1568M33 347.5H1568M34 358.5H1568M33 379.5H1568M34 390.5H1568M33 401.5H1568M33 423.5H1568M33 433.5H1568M34 444.5H1568M34 466.5H1568M33 477.5H1568M34 488.5H1568M33 509.5H1568M34 520.5H1568M33 531.5H1568M33 553.5H1568M33 563.5H1568M34 574.5H1568M34 596.5H1568M33 607.5H1568M34 618.5H1568M33 639.5H1568M34 650.5H1568M33 661.5H1568M33 683.5H1568M33 693.5H1568M34 704.5H1568M34 726.5H1568"/>
<path stroke="#39596f" d="M64.5 76V727M107.5 75V727M151.5 75V727M194.5 76V727M237.5 75V727M281.5 75V727M324.5 76V727M367.5 75V727M411.5 75V727M454.5 76V727M497.5 75V727M541.5 75V727M584.5 76V727M627.5 75V727M671.5 75V727M714.5 76V727M757.5 75V727M801.5 75V727M844.5 76V727M887.5 75V727M930.5 76V727M974.5 76V727M1017.5 75V727M1060.5 76V727M1104.5 76V727M1147.5 75V727M1190.5 76V727M1234.5 76V727M1277.5 75V727M1320.5 76V727M1364.5 76V727M1407.5 75V727M1450.5 76V727M1494.5 76V727M1537.5 75V727M33 109.5H1568M34 152.5H1568M33 195.5H1568M33 239.5H1568M34 282.5H1568M33 325.5H1568M33 369.5H1568M34 412.5H1568M33 455.5H1568M34 498.5H1568M34 542.5H1568M33 585.5H1568M34 628.5H1568M34 672.5H1568M33 715.5H1568"/>
</g></g>
<path d="M627.5 109.5L974.5 109.5M974.5 109.5L974.5 152.5M627.5 152.5L627.5 109.5M974.5 152.5L1017.5 152.5M1017.5 152.5L1060.5 163.5M1060.5 163.5L1093.5 184.5M1093.5 184.5L1115.5 217.5M1115.5 217.5L1125.5 260.5M1125.5 260.5L1125.5 282.5M1125.5 282.5L1125.5 520.5M1125.5 520.5L736.5 520.5M476.5 520.5L476.5 282.5M476.5 282.5L476.5 217.5M476.5 217.5L497.5 174.5M497.5 174.5L541.5 152.5M541.5 152.5L627.5 152.5M779.5 325.5L779.5 369.5M779.5 369.5L801.5 390.5M801.5 390.5L822.5 369.5M822.5 369.5L930.5 369.5M930.5 369.5L952.5 390.5M952.5 390.5L974.5 369.5M974.5 369.5L974.5 325.5M974.5 325.5L952.5 304.5M952.5 304.5L930.5 325.5M930.5 325.5L822.5 325.5M822.5 325.5L801.5 304.5M801.5 304.5L779.5 325.5M551.5 520.5L476.5 520.5M736.5 520.5L660.5 520.5M736.5 520.5L736.5 531.5M736.5 531.5L736.5 693.5M736.5 693.5L476.5 693.5M476.5 693.5L476.5 531.5M476.5 531.5L476.5 520.5M551.5 520.5L551.5 531.5M551.5 531.5L562.5 531.5M562.5 531.5L562.5 520.5M562.5 520.5L551.5 520.5M649.5 520.5L649.5 531.5M649.5 531.5L660.5 531.5M660.5 531.5L660.5 520.5M660.5 520.5L649.5 520.5M801.5 109.5L801.5 115.0M974.5 131.5L969.0 131.5M627.5 131.5L633.0 131.5M996.5 152.5L996.5 158.0M1039.0 158.0L1037.6 163.3M1077.0 174.0L1074.0 178.6M1104.5 201.0L1099.9 204.1M1120.5 239.0L1115.1 240.2M1125.5 271.5L1120.0 271.5M1125.5 401.5L1120.0 401.5M931.5 520.5L931.5 515.0M476.5 401.5L482.0 401.5M476.5 250.5L482.0 250.5M487.0 196.0L491.9 198.4M519.5 163.5L522.0 168.4M584.5 152.5L584.5 158.0M779.5 347.5L774.0 347.5M790.5 380.0L786.7 384.0M812.0 380.0L815.9 383.9M876.5 369.5L876.5 375.0M941.5 380.0L937.7 384.0M963.5 380.0L967.3 384.0M974.5 347.5L980.0 347.5M963.5 315.0L967.3 311.0M941.5 315.0L937.7 311.0M876.5 325.5L876.5 320.0M812.0 315.0L815.9 311.1M790.5 315.0L786.7 311.0M514.5 520.5L514.5 515.0M698.5 520.5L698.5 515.0M736.5 526.5L731.0 526.5M736.5 612.5L731.0 612.5M606.5 693.5L606.5 688.0M476.5 612.5L482.0 612.5M476.5 526.5L482.0 526.5M551.5 526.5L546.0 526.5M557.5 531.5L557.5 537.0M562.5 526.5L568.0 526.5M557.5 520.5L557.5 515.0M649.5 526.5L644.0 526.5M655.5 531.5L655.5 537.0M660.5 526.5L666.0 526.5M655.5 520.5L655.5 515.0" fill="none" stroke="#ffffff" stroke-width="1.15"/>
<path d="M611.5 585.5H643.5M627.5 569.5V601.5" stroke="#f0a010" stroke-width="1.300" fill="none" shape-rendering="crispEdges"/>
<g shape-rendering="crispEdges">
<path d="M475 216h3v3h-3zM475 281h3v3h-3zM475 519h3v3h-3zM475 530h3v3h-3zM475 692h3v3h-3zM480 525h3v3h-3zM480 665h3v3h-3zM485 682h3v3h-3zM496 173h3v3h-3zM502 687h3v3h-3zM518 281h3v3h-3zM540 151h3v3h-3zM550 519h3v3h-3zM550 530h3v3h-3zM561 303h3v3h-3zM561 519h3v3h-3zM561 530h3v3h-3zM561 562h3v3h-3zM561 606h3v3h-3zM567 568h3v3h-3zM567 600h3v3h-3zM572 324h3v3h-3zM572 368h3v3h-3zM572 411h3v3h-3zM572 454h3v3h-3zM583 216h3v3h-3zM583 313h3v3h-3zM583 324h3v3h-3zM583 368h3v3h-3zM583 378h3v3h-3zM583 400h3v3h-3zM583 411h3v3h-3zM583 454h3v3h-3zM583 465h3v3h-3zM605 205h3v3h-3zM610 194h3v3h-3zM615 183h3v3h-3zM621 173h3v3h-3zM626 108h3v3h-3zM626 151h3v3h-3zM626 162h3v3h-3zM626 313h3v3h-3zM626 324h3v3h-3zM626 368h3v3h-3zM626 378h3v3h-3zM626 400h3v3h-3zM626 411h3v3h-3zM626 454h3v3h-3zM626 465h3v3h-3zM637 324h3v3h-3zM637 368h3v3h-3zM637 411h3v3h-3zM637 454h3v3h-3zM642 568h3v3h-3zM642 600h3v3h-3zM648 389h3v3h-3zM648 519h3v3h-3zM648 530h3v3h-3zM648 562h3v3h-3zM648 606h3v3h-3zM659 324h3v3h-3zM659 368h3v3h-3zM659 519h3v3h-3zM659 530h3v3h-3zM670 313h3v3h-3zM670 324h3v3h-3zM670 368h3v3h-3zM670 378h3v3h-3zM707 687h3v3h-3zM713 313h3v3h-3zM713 324h3v3h-3zM713 368h3v3h-3zM713 378h3v3h-3zM724 324h3v3h-3zM724 368h3v3h-3zM724 682h3v3h-3zM729 525h3v3h-3zM729 665h3v3h-3zM735 303h3v3h-3zM735 389h3v3h-3zM735 519h3v3h-3zM735 530h3v3h-3zM735 692h3v3h-3zM778 259h3v3h-3zM778 324h3v3h-3zM778 368h3v3h-3zM778 432h3v3h-3zM800 303h3v3h-3zM800 389h3v3h-3zM821 259h3v3h-3zM821 281h3v3h-3zM821 324h3v3h-3zM821 368h3v3h-3zM821 411h3v3h-3zM821 432h3v3h-3zM843 238h3v3h-3zM843 454h3v3h-3zM908 238h3v3h-3zM908 454h3v3h-3zM929 259h3v3h-3zM929 281h3v3h-3zM929 324h3v3h-3zM929 368h3v3h-3zM929 411h3v3h-3zM929 432h3v3h-3zM951 303h3v3h-3zM951 389h3v3h-3zM973 108h3v3h-3zM973 151h3v3h-3zM973 162h3v3h-3zM973 259h3v3h-3zM973 324h3v3h-3zM973 368h3v3h-3zM973 432h3v3h-3zM978 173h3v3h-3zM984 183h3v3h-3zM989 194h3v3h-3zM994 205h3v3h-3zM1016 151h3v3h-3zM1016 216h3v3h-3zM1016 303h3v3h-3zM1016 389h3v3h-3zM1059 162h3v3h-3zM1081 281h3v3h-3zM1092 183h3v3h-3zM1114 216h3v3h-3zM1124 259h3v3h-3zM1124 281h3v3h-3zM1124 519h3v3h-3z" fill="#1c72da"/>
<path d="M475 216h1v1h-1zM475 281h1v1h-1zM475 519h1v1h-1zM475 530h1v1h-1zM475 692h1v1h-1zM480 525h1v1h-1zM480 665h1v1h-1zM485 682h1v1h-1zM496 173h1v1h-1zM502 687h1v1h-1zM518 281h1v1h-1zM540 151h1v1h-1zM550 519h1v1h-1zM550 530h1v1h-1zM561 303h1v1h-1zM561 519h1v1h-1zM561 530h1v1h-1zM561 562h1v1h-1zM561 606h1v1h-1zM567 568h1v1h-1zM567 600h1v1h-1zM572 324h1v1h-1zM572 368h1v1h-1zM572 411h1v1h-1zM572 454h1v1h-1zM583 216h1v1h-1zM583 313h1v1h-1zM583 324h1v1h-1zM583 368h1v1h-1zM583 378h1v1h-1zM583 400h1v1h-1zM583 411h1v1h-1zM583 454h1v1h-1zM583 465h1v1h-1zM605 205h1v1h-1zM610 194h1v1h-1zM615 183h1v1h-1zM621 173h1v1h-1zM626 108h1v1h-1zM626 151h1v1h-1zM626 162h1v1h-1zM626 313h1v1h-1zM626 324h1v1h-1zM626 368h1v1h-1zM626 378h1v1h-1zM626 400h1v1h-1zM626 411h1v1h-1zM626 454h1v1h-1zM626 465h1v1h-1zM637 324h1v1h-1zM637 368h1v1h-1zM637 411h1v1h-1zM637 454h1v1h-1zM642 568h1v1h-1zM642 600h1v1h-1zM648 389h1v1h-1zM648 519h1v1h-1zM648 530h1v1h-1zM648 562h1v1h-1zM648 606h1v1h-1zM659 324h1v1h-1zM659 368h1v1h-1zM659 519h1v1h-1zM659 530h1v1h-1zM670 313h1v1h-1zM670 324h1v1h-1zM670 368h1v1h-1zM670 378h1v1h-1zM707 687h1v1h-1zM713 313h1v1h-1zM713 324h1v1h-1zM713 368h1v1h-1zM713 378h1v1h-1zM724 324h1v1h-1zM724 368h1v1h-1zM724 682h1v1h-1zM729 525h1v1h-1zM729 665h1v1h-1zM735 303h1v1h-1zM735 389h1v1h-1zM735 519h1v1h-1zM735 530h1v1h-1zM735 692h1v1h-1zM778 259h1v1h-1zM778 324h1v1h-1zM778 368h1v1h-1zM778 432h1v1h-1zM800 303h1v1h-1zM800 389h1v1h-1zM821 259h1v1h-1zM821 281h1v1h-1zM821 324h1v1h-1zM821 368h1v1h-1zM821 411h1v1h-1zM821 432h1v1h-1zM843 238h1v1h-1zM843 454h1v1h-1zM908 238h1v1h-1zM908 454h1v1h-1zM929 259h1v1h-1zM929 281h1v1h-1zM929 324h1v1h-1zM929 368h1v1h-1zM929 411h1v1h-1zM929 432h1v1h-1zM951 303h1v1h-1zM951 389h1v1h-1zM973 108h1v1h-1zM973 151h1v1h-1zM973 162h1v1h-1zM973 259h1v1h-1zM973 324h1v1h-1zM973 368h1v1h-1zM973 432h1v1h-1zM978 173h1v1h-1zM984 183h1v1h-1zM989 194h1v1h-1zM994 205h1v1h-1zM1016 151h1v1h-1zM1016 216h1v1h-1zM1016 303h1v1h-1zM1016 389h1v1h-1zM1059 162h1v1h-1zM1081 281h1v1h-1zM1092 183h1v1h-1zM1114 216h1v1h-1zM1124 259h1v1h-1zM1124 281h1v1h-1zM1124 519h1v1h-1z" fill="#b8f4ff"/>
<path d="M476 216h1v1h-1zM475 217h1v1h-1zM476 281h1v1h-1zM475 282h1v1h-1zM476 519h1v1h-1zM475 520h1v1h-1zM476 530h1v1h-1zM475 531h1v1h-1zM476 692h1v1h-1zM475 693h1v1h-1zM481 525h1v1h-1zM480 526h1v1h-1zM481 665h1v1h-1zM480 666h1v1h-1zM486 682h1v1h-1zM485 683h1v1h-1zM497 173h1v1h-1zM496 174h1v1h-1zM503 687h1v1h-1zM502 688h1v1h-1zM519 281h1v1h-1zM518 282h1v1h-1zM541 151h1v1h-1zM540 152h1v1h-1zM551 519h1v1h-1zM550 520h1v1h-1zM551 530h1v1h-1zM550 531h1v1h-1zM562 303h1v1h-1zM561 304h1v1h-1zM562 519h1v1h-1zM561 520h1v1h-1zM562 530h1v1h-1zM561 531h1v1h-1zM562 562h1v1h-1zM561 563h1v1h-1zM562 606h1v1h-1zM561 607h1v1h-1zM568 568h1v1h-1zM567 569h1v1h-1zM568 600h1v1h-1zM567 601h1v1h-1zM573 324h1v1h-1zM572 325h1v1h-1zM573 368h1v1h-1zM572 369h1v1h-1zM573 411h1v1h-1zM572 412h1v1h-1zM573 454h1v1h-1zM572 455h1v1h-1zM584 216h1v1h-1zM583 217h1v1h-1zM584 313h1v1h-1zM583 314h1v1h-1zM584 324h1v1h-1zM583 325h1v1h-1zM584 368h1v1h-1zM583 369h1v1h-1zM584 378h1v1h-1zM583 379h1v1h-1zM584 400h1v1h-1zM583 401h1v1h-1zM584 411h1v1h-1zM583 412h1v1h-1zM584 454h1v1h-1zM583 455h1v1h-1zM584 465h1v1h-1zM583 466h1v1h-1zM606 205h1v1h-1zM605 206h1v1h-1zM611 194h1v1h-1zM610 195h1v1h-1zM616 183h1v1h-1zM615 184h1v1h-1zM622 173h1v1h-1zM621 174h1v1h-1zM627 108h1v1h-1zM626 109h1v1h-1zM627 151h1v1h-1zM626 152h1v1h-1zM627 162h1v1h-1zM626 163h1v1h-1zM627 313h1v1h-1zM626 314h1v1h-1zM627 324h1v1h-1zM626 325h1v1h-1zM627 368h1v1h-1zM626 369h1v1h-1zM627 378h1v1h-1zM626 379h1v1h-1zM627 400h1v1h-1zM626 401h1v1h-1zM627 411h1v1h-1zM626 412h1v1h-1zM627 454h1v1h-1zM626 455h1v1h-1zM627 465h1v1h-1zM626 466h1v1h-1zM638 324h1v1h-1zM637 325h1v1h-1zM638 368h1v1h-1zM637 369h1v1h-1zM638 411h1v1h-1zM637 412h1v1h-1zM638 454h1v1h-1zM637 455h1v1h-1zM643 568h1v1h-1zM642 569h1v1h-1zM643 600h1v1h-1zM642 601h1v1h-1zM649 389h1v1h-1zM648 390h1v1h-1zM649 519h1v1h-1zM648 520h1v1h-1zM649 530h1v1h-1zM648 531h1v1h-1zM649 562h1v1h-1zM648 563h1v1h-1zM649 606h1v1h-1zM648 607h1v1h-1zM660 324h1v1h-1zM659 325h1v1h-1zM660 368h1v1h-1zM659 369h1v1h-1zM660 519h1v1h-1zM659 520h1v1h-1zM660 530h1v1h-1zM659 531h1v1h-1zM671 313h1v1h-1zM670 314h1v1h-1zM671 324h1v1h-1zM670 325h1v1h-1zM671 368h1v1h-1zM670 369h1v1h-1zM671 378h1v1h-1zM670 379h1v1h-1zM708 687h1v1h-1zM707 688h1v1h-1zM714 313h1v1h-1zM713 314h1v1h-1zM714 324h1v1h-1zM713 325h1v1h-1zM714 368h1v1h-1zM713 369h1v1h-1zM714 378h1v1h-1zM713 379h1v1h-1zM725 324h1v1h-1zM724 325h1v1h-1zM725 368h1v1h-1zM724 369h1v1h-1zM725 682h1v1h-1zM724 683h1v1h-1zM730 525h1v1h-1zM729 526h1v1h-1zM730 665h1v1h-1zM729 666h1v1h-1zM736 303h1v1h-1zM735 304h1v1h-1zM736 389h1v1h-1zM735 390h1v1h-1zM736 519h1v1h-1zM735 520h1v1h-1zM736 530h1v1h-1zM735 531h1v1h-1zM736 692h1v1h-1zM735 693h1v1h-1zM779 259h1v1h-1zM778 260h1v1h-1zM779 324h1v1h-1zM778 325h1v1h-1zM779 368h1v1h-1zM778 369h1v1h-1zM779 432h1v1h-1zM778 433h1v1h-1zM801 303h1v1h-1zM800 304h1v1h-1zM801 389h1v1h-1zM800 390h1v1h-1zM822 259h1v1h-1zM821 260h1v1h-1zM822 281h1v1h-1zM821 282h1v1h-1zM822 324h1v1h-1zM821 325h1v1h-1zM822 368h1v1h-1zM821 369h1v1h-1zM822 411h1v1h-1zM821 412h1v1h-1zM822 432h1v1h-1zM821 433h1v1h-1zM844 238h1v1h-1zM843 239h1v1h-1zM844 454h1v1h-1zM843 455h1v1h-1zM909 238h1v1h-1zM908 239h1v1h-1zM909 454h1v1h-1zM908 455h1v1h-1zM930 259h1v1h-1zM929 260h1v1h-1zM930 281h1v1h-1zM929 282h1v1h-1zM930 324h1v1h-1zM929 325h1v1h-1zM930 368h1v1h-1zM929 369h1v1h-1zM930 411h1v1h-1zM929 412h1v1h-1zM930 432h1v1h-1zM929 433h1v1h-1zM952 303h1v1h-1zM951 304h1v1h-1zM952 389h1v1h-1zM951 390h1v1h-1zM974 108h1v1h-1zM973 109h1v1h-1zM974 151h1v1h-1zM973 152h1v1h-1zM974 162h1v1h-1zM973 163h1v1h-1zM974 259h1v1h-1zM973 260h1v1h-1zM974 324h1v1h-1zM973 325h1v1h-1zM974 368h1v1h-1zM973 369h1v1h-1zM974 432h1v1h-1zM973 433h1v1h-1zM979 173h1v1h-1zM978 174h1v1h-1zM985 183h1v1h-1zM984 184h1v1h-1zM990 194h1v1h-1zM989 195h1v1h-1zM995 205h1v1h-1zM994 206h1v1h-1zM1017 151h1v1h-1zM1016 152h1v1h-1zM1017 216h1v1h-1zM1016 217h1v1h-1zM1017 303h1v1h-1zM1016 304h1v1h-1zM1017 389h1v1h-1zM1016 390h1v1h-1zM1060 162h1v1h-1zM1059 163h1v1h-1zM1082 281h1v1h-1zM1081 282h1v1h-1zM1093 183h1v1h-1zM1092 184h1v1h-1zM1115 216h1v1h-1zM1114 217h1v1h-1zM1125 259h1v1h-1zM1124 260h1v1h-1zM1125 281h1v1h-1zM1124 282h1v1h-1zM1125 519h1v1h-1zM1124 520h1v1h-1z" fill="#88d4ff"/>
<path d="M477 216h1v1h-1zM475 218h1v1h-1zM477 281h1v1h-1zM475 283h1v1h-1zM477 519h1v1h-1zM475 521h1v1h-1zM477 530h1v1h-1zM475 532h1v1h-1zM477 692h1v1h-1zM475 694h1v1h-1zM482 525h1v1h-1zM480 527h1v1h-1zM482 665h1v1h-1zM480 667h1v1h-1zM487 682h1v1h-1zM485 684h1v1h-1zM498 173h1v1h-1zM496 175h1v1h-1zM504 687h1v1h-1zM502 689h1v1h-1zM520 281h1v1h-1zM518 283h1v1h-1zM542 151h1v1h-1zM540 153h1v1h-1zM552 519h1v1h-1zM550 521h1v1h-1zM552 530h1v1h-1zM550 532h1v1h-1zM563 303h1v1h-1zM561 305h1v1h-1zM563 519h1v1h-1zM561 521h1v1h-1zM563 530h1v1h-1zM561 532h1v1h-1zM563 562h1v1h-1zM561 564h1v1h-1zM563 606h1v1h-1zM561 608h1v1h-1zM569 568h1v1h-1zM567 570h1v1h-1zM569 600h1v1h-1zM567 602h1v1h-1zM574 324h1v1h-1zM572 326h1v1h-1zM574 368h1v1h-1zM572 370h1v1h-1zM574 411h1v1h-1zM572 413h1v1h-1zM574 454h1v1h-1zM572 456h1v1h-1zM585 216h1v1h-1zM583 218h1v1h-1zM585 313h1v1h-1zM583 315h1v1h-1zM585 324h1v1h-1zM583 326h1v1h-1zM585 368h1v1h-1zM583 370h1v1h-1zM585 378h1v1h-1zM583 380h1v1h-1zM585 400h1v1h-1zM583 402h1v1h-1zM585 411h1v1h-1zM583 413h1v1h-1zM585 454h1v1h-1zM583 456h1v1h-1zM585 465h1v1h-1zM583 467h1v1h-1zM607 205h1v1h-1zM605 207h1v1h-1zM612 194h1v1h-1zM610 196h1v1h-1zM617 183h1v1h-1zM615 185h1v1h-1zM623 173h1v1h-1zM621 175h1v1h-1zM628 108h1v1h-1zM626 110h1v1h-1zM628 151h1v1h-1zM626 153h1v1h-1zM628 162h1v1h-1zM626 164h1v1h-1zM628 313h1v1h-1zM626 315h1v1h-1zM628 324h1v1h-1zM626 326h1v1h-1zM628 368h1v1h-1zM626 370h1v1h-1zM628 378h1v1h-1zM626 380h1v1h-1zM628 400h1v1h-1zM626 402h1v1h-1zM628 411h1v1h-1zM626 413h1v1h-1zM628 454h1v1h-1zM626 456h1v1h-1zM628 465h1v1h-1zM626 467h1v1h-1zM639 324h1v1h-1zM637 326h1v1h-1zM639 368h1v1h-1zM637 370h1v1h-1zM639 411h1v1h-1zM637 413h1v1h-1zM639 454h1v1h-1zM637 456h1v1h-1zM644 568h1v1h-1zM642 570h1v1h-1zM644 600h1v1h-1zM642 602h1v1h-1zM650 389h1v1h-1zM648 391h1v1h-1zM650 519h1v1h-1zM648 521h1v1h-1zM650 530h1v1h-1zM648 532h1v1h-1zM650 562h1v1h-1zM648 564h1v1h-1zM650 606h1v1h-1zM648 608h1v1h-1zM661 324h1v1h-1zM659 326h1v1h-1zM661 368h1v1h-1zM659 370h1v1h-1zM661 519h1v1h-1zM659 521h1v1h-1zM661 530h1v1h-1zM659 532h1v1h-1zM672 313h1v1h-1zM670 315h1v1h-1zM672 324h1v1h-1zM670 326h1v1h-1zM672 368h1v1h-1zM670 370h1v1h-1zM672 378h1v1h-1zM670 380h1v1h-1zM709 687h1v1h-1zM707 689h1v1h-1zM715 313h1v1h-1zM713 315h1v1h-1zM715 324h1v1h-1zM713 326h1v1h-1zM715 368h1v1h-1zM713 370h1v1h-1zM715 378h1v1h-1zM713 380h1v1h-1zM726 324h1v1h-1zM724 326h1v1h-1zM726 368h1v1h-1zM724 370h1v1h-1zM726 682h1v1h-1zM724 684h1v1h-1zM731 525h1v1h-1zM729 527h1v1h-1zM731 665h1v1h-1zM729 667h1v1h-1zM737 303h1v1h-1zM735 305h1v1h-1zM737 389h1v1h-1zM735 391h1v1h-1zM737 519h1v1h-1zM735 521h1v1h-1zM737 530h1v1h-1zM735 532h1v1h-1zM737 692h1v1h-1zM735 694h1v1h-1zM780 259h1v1h-1zM778 261h1v1h-1zM780 324h1v1h-1zM778 326h1v1h-1zM780 368h1v1h-1zM778 370h1v1h-1zM780 432h1v1h-1zM778 434h1v1h-1zM802 303h1v1h-1zM800 305h1v1h-1zM802 389h1v1h-1zM800 391h1v1h-1zM823 259h1v1h-1zM821 261h1v1h-1zM823 281h1v1h-1zM821 283h1v1h-1zM823 324h1v1h-1zM821 326h1v1h-1zM823 368h1v1h-1zM821 370h1v1h-1zM823 411h1v1h-1zM821 413h1v1h-1zM823 432h1v1h-1zM821 434h1v1h-1zM845 238h1v1h-1zM843 240h1v1h-1zM845 454h1v1h-1zM843 456h1v1h-1zM910 238h1v1h-1zM908 240h1v1h-1zM910 454h1v1h-1zM908 456h1v1h-1zM931 259h1v1h-1zM929 261h1v1h-1zM931 281h1v1h-1zM929 283h1v1h-1zM931 324h1v1h-1zM929 326h1v1h-1zM931 368h1v1h-1zM929 370h1v1h-1zM931 411h1v1h-1zM929 413h1v1h-1zM931 432h1v1h-1zM929 434h1v1h-1zM953 303h1v1h-1zM951 305h1v1h-1zM953 389h1v1h-1zM951 391h1v1h-1zM975 108h1v1h-1zM973 110h1v1h-1zM975 151h1v1h-1zM973 153h1v1h-1zM975 162h1v1h-1zM973 164h1v1h-1zM975 259h1v1h-1zM973 261h1v1h-1zM975 324h1v1h-1zM973 326h1v1h-1zM975 368h1v1h-1zM973 370h1v1h-1zM975 432h1v1h-1zM973 434h1v1h-1zM980 173h1v1h-1zM978 175h1v1h-1zM986 183h1v1h-1zM984 185h1v1h-1zM991 194h1v1h-1zM989 196h1v1h-1zM996 205h1v1h-1zM994 207h1v1h-1zM1018 151h1v1h-1zM1016 153h1v1h-1zM1018 216h1v1h-1zM1016 218h1v1h-1zM1018 303h1v1h-1zM1016 305h1v1h-1zM1018 389h1v1h-1zM1016 391h1v1h-1zM1061 162h1v1h-1zM1059 164h1v1h-1zM1083 281h1v1h-1zM1081 283h1v1h-1zM1094 183h1v1h-1zM1092 185h1v1h-1zM1116 216h1v1h-1zM1114 218h1v1h-1zM1126 259h1v1h-1zM1124 261h1v1h-1zM1126 281h1v1h-1zM1124 283h1v1h-1zM1126 519h1v1h-1zM1124 521h1v1h-1z" fill="#4aa4f8"/>
<path d="M476 217h1v1h-1zM476 282h1v1h-1zM476 520h1v1h-1zM476 531h1v1h-1zM476 693h1v1h-1zM481 526h1v1h-1zM481 666h1v1h-1zM486 683h1v1h-1zM497 174h1v1h-1zM503 688h1v1h-1zM519 282h1v1h-1zM541 152h1v1h-1zM551 520h1v1h-1zM551 531h1v1h-1zM562 304h1v1h-1zM562 520h1v1h-1zM562 531h1v1h-1zM562 563h1v1h-1zM562 607h1v1h-1zM568 569h1v1h-1zM568 601h1v1h-1zM573 325h1v1h-1zM573 369h1v1h-1zM573 412h1v1h-1zM573 455h1v1h-1zM584 217h1v1h-1zM584 314h1v1h-1zM584 325h1v1h-1zM584 369h1v1h-1zM584 379h1v1h-1zM584 401h1v1h-1zM584 412h1v1h-1zM584 455h1v1h-1zM584 466h1v1h-1zM606 206h1v1h-1zM611 195h1v1h-1zM616 184h1v1h-1zM622 174h1v1h-1zM627 109h1v1h-1zM627 152h1v1h-1zM627 163h1v1h-1zM627 314h1v1h-1zM627 325h1v1h-1zM627 369h1v1h-1zM627 379h1v1h-1zM627 401h1v1h-1zM627 412h1v1h-1zM627 455h1v1h-1zM627 466h1v1h-1zM638 325h1v1h-1zM638 369h1v1h-1zM638 412h1v1h-1zM638 455h1v1h-1zM643 569h1v1h-1zM643 601h1v1h-1zM649 390h1v1h-1zM649 520h1v1h-1zM649 531h1v1h-1zM649 563h1v1h-1zM649 607h1v1h-1zM660 325h1v1h-1zM660 369h1v1h-1zM660 520h1v1h-1zM660 531h1v1h-1zM671 314h1v1h-1zM671 325h1v1h-1zM671 369h1v1h-1zM671 379h1v1h-1zM708 688h1v1h-1zM714 314h1v1h-1zM714 325h1v1h-1zM714 369h1v1h-1zM714 379h1v1h-1zM725 325h1v1h-1zM725 369h1v1h-1zM725 683h1v1h-1zM730 526h1v1h-1zM730 666h1v1h-1zM736 304h1v1h-1zM736 390h1v1h-1zM736 520h1v1h-1zM736 531h1v1h-1zM736 693h1v1h-1zM779 260h1v1h-1zM779 325h1v1h-1zM779 369h1v1h-1zM779 433h1v1h-1zM801 304h1v1h-1zM801 390h1v1h-1zM822 260h1v1h-1zM822 282h1v1h-1zM822 325h1v1h-1zM822 369h1v1h-1zM822 412h1v1h-1zM822 433h1v1h-1zM844 239h1v1h-1zM844 455h1v1h-1zM909 239h1v1h-1zM909 455h1v1h-1zM930 260h1v1h-1zM930 282h1v1h-1zM930 325h1v1h-1zM930 369h1v1h-1zM930 412h1v1h-1zM930 433h1v1h-1zM952 304h1v1h-1zM952 390h1v1h-1zM974 109h1v1h-1zM974 152h1v1h-1zM974 163h1v1h-1zM974 260h1v1h-1zM974 325h1v1h-1zM974 369h1v1h-1zM974 433h1v1h-1zM979 174h1v1h-1zM985 184h1v1h-1zM990 195h1v1h-1zM995 206h1v1h-1zM1017 152h1v1h-1zM1017 217h1v1h-1zM1017 304h1v1h-1zM1017 390h1v1h-1zM1060 163h1v1h-1zM1082 282h1v1h-1zM1093 184h1v1h-1zM1115 217h1v1h-1zM1125 260h1v1h-1zM1125 282h1v1h-1zM1125 520h1v1h-1z" fill="#2a82e2"/>
</g>
</svg>
<div class="abs" style="left:1575px;top:73px;width:22px;height:14px;border:1px solid #8c8c8c;background:#f4f4f4"></div>
<svg class="abs" style="left:1578px;top:75px;width:18px;height:10px" viewBox="0 0 18 10"><defs><linearGradient id="gArr" x1="0" y1="0" x2="1" y2="0"><stop offset="0" stop-color="#2c62d0"/><stop offset="1" stop-color="#a8c8ff"/></linearGradient></defs><path d="M0 5l5.500-4.500v9zM6 5l5.500-4.500v9zM12 5l5.500-4.500v9z" fill="url(#gArr)"/></svg>
<div class="tab" style="top:93px;height:104px"></div>
<div class="vt" style="left:1581px;top:177.99px;transform:rotate(-90deg) scaleX(0.8898)">Undo / Redo</div>
<div class="tab" style="top:200px;height:115px"></div>
<div class="vt" style="left:1581px;top:295.24px;transform:rotate(-90deg) scaleX(0.8703)">Draw Settings</div>
<div class="tab" style="top:318px;height:107px"></div>
<div class="vt" style="left:1581px;top:405.92px;transform:rotate(-90deg) scaleX(0.8953)">Tag Explorer</div>
<div class="tab" style="top:428px;height:60px"></div>
<div class="vt" style="left:1581px;top:470.02px;transform:rotate(-90deg) scaleX(0.9703)">Help</div>
<div class="t" style="left:20.47px;top:798.8px;font:bold 46.670px 'DejaVu Sans',sans-serif;color:#6e6e6e;transform:scaleX(1.0182);transform-origin:0 0;">Sectors Mode</div>
<div class="t" style="left:1485.0309375px;top:752px;font:13px 'Liberation Sans',sans-serif;color:#6a6a6a;transform:scaleX(0.9800);transform-origin:0 0;-webkit-text-stroke:.35px #6c6c6c;">129</div>
<div class="t" style="left:1515.90px;top:752px;font:13px 'Liberation Sans',sans-serif;color:#6a6a6a;transform:scaleX(0.9872);transform-origin:0 0;-webkit-text-stroke:.35px #6c6c6c;">Vertices</div>
<div class="t" style="left:1485.0309375px;top:770px;font:13px 'Liberation Sans',sans-serif;color:#6a6a6a;transform:scaleX(0.9800);transform-origin:0 0;-webkit-text-stroke:.35px #6c6c6c;">141</div>
<div class="t" style="left:1514.88px;top:770px;font:13px 'Liberation Sans',sans-serif;color:#6a6a6a;transform:scaleX(0.9821);transform-origin:0 0;-webkit-text-stroke:.35px #6c6c6c;">Linedefs</div>
<div class="t" style="left:1485.0309375px;top:788px;font:13px 'Liberation Sans',sans-serif;color:#6a6a6a;transform:scaleX(0.9800);transform-origin:0 0;-webkit-text-stroke:.35px #6c6c6c;">241</div>
<div class="t" style="left:1515.34px;top:788px;font:13px 'Liberation Sans',sans-serif;color:#6a6a6a;transform:scaleX(0.9606);transform-origin:0 0;-webkit-text-stroke:.35px #6c6c6c;">Sidedefs</div>
<div class="t" style="left:1492.120625px;top:806px;font:13px 'Liberation Sans',sans-serif;color:#6a6a6a;transform:scaleX(0.9800);transform-origin:0 0;-webkit-text-stroke:.35px #6c6c6c;">20</div>
<div class="t" style="left:1515.33px;top:806px;font:13px 'Liberation Sans',sans-serif;color:#6a6a6a;transform:scaleX(0.9760);transform-origin:0 0;-webkit-text-stroke:.35px #6c6c6c;">Sectors</div>
<div class="t" style="left:1499.2103124999999px;top:824.5px;font:13px 'Liberation Sans',sans-serif;color:#6a6a6a;transform:scaleX(0.9800);transform-origin:0 0;-webkit-text-stroke:.35px #6c6c6c;">4</div>
<div class="t" style="left:1515.65px;top:824.5px;font:13px 'Liberation Sans',sans-serif;color:#6a6a6a;transform:scaleX(0.9686);transform-origin:0 0;-webkit-text-stroke:.35px #6c6c6c;">Things</div>
<div class="abs" style="left:1576px;top:732px;width:22px;height:18px;border:1px solid #8c8c8c;background:#f4f4f4"></div>
<svg class="abs" style="left:1581px;top:738px;width:13px;height:8px" viewBox="0 0 13 8"><defs><linearGradient id="gArr2" x1="0" y1="0" x2="0" y2="1"><stop offset="0" stop-color="#2c62d0"/><stop offset="1" stop-color="#9cc0ff"/></linearGradient></defs><path d="M0 .5h13L6.500 7.500z" fill="url(#gArr2)"/></svg>
<div id="statusbar"></div>
<div class="abs" style="left:3px;top:841px;width:15px;height:15px;border-radius:3px;background:linear-gradient(#62e462,#2cc42c 30%,#12ac12 55%,#0e9c0e);border:1px solid #129a12"></div>
<div class="t" style="left:21.57px;top:853.2px;font:bold 11px 'DejaVu Sans',sans-serif;color:#000;transform:scaleX(1.0381);transform-origin:0 0;">Nothing selected.</div>
<div class="t" style="left:1024.69px;top:853.2px;font:11.500px 'DejaVu Sans',sans-serif;color:#000;transform:scaleX(1.0203);transform-origin:0 0;">Doom: Doom 2 (Doom format)</div>
<div class="ssep" style="left:1212px"></div>
<div class="ssep" style="left:1317px"></div>
<div class="ssep" style="left:1412px"></div>
<div class="ssep" style="left:1535px"></div>
<div class="t" style="left:1238.53px;top:853.2px;font:bold 11px 'DejaVu Sans',sans-serif;color:#000;transform:scaleX(1.0458);transform-origin:0 0;">16 mp</div>
<svg class="ico" style="left:1285.5px;top:841.5px;width:15px;height:15px" viewBox="0 0 16 16" ><rect x="1" y="1" width="4" height="4" fill="#2c4f88"/><rect x="1" y="6" width="4" height="4" fill="#2c4f88"/><rect x="1" y="11" width="4" height="4" fill="#2c4f88"/><rect x="6" y="1" width="4" height="4" fill="#2c4f88"/><rect x="6" y="6" width="4" height="4" fill="#2c4f88"/><rect x="6" y="11" width="4" height="4" fill="#2c4f88"/><rect x="11" y="1" width="4" height="4" fill="#2c4f88"/><rect x="11" y="6" width="4" height="4" fill="#2c4f88"/><rect x="11" y="11" width="4" height="4" fill="#2c4f88"/></svg>
<svg class="abs" style="left:1303px;top:847px;width:5px;height:4px" viewBox="0 0 5 4"><path d="M0 4h5L2.500 0z" fill="#2c4f9a"/></svg>
<div class="t" style="left:1343.65px;top:853.2px;font:bold 11px 'DejaVu Sans',sans-serif;color:#000;transform:scaleX(1.1390);transform-origin:0 0;">68%</div>
<svg class="ico" style="left:1381.0px;top:841.0px;width:16px;height:16px" viewBox="0 0 16 16" ><path d="M10 10l5 5" stroke="#333" stroke-width="2.600" stroke-linecap="round"/><path d="M10 10l5 5" stroke="#999" stroke-width="1"/><circle cx="6.500" cy="6.500" r="5.300" fill="#dcecff" stroke="#3c64c8" stroke-width="1.500"/><path d="M3.500 5.500a3.500 3.500 0 013-2.500" stroke="#fff" stroke-width="1.300" fill="none"/></svg>
<svg class="abs" style="left:1399px;top:847px;width:5px;height:4px" viewBox="0 0 5 4"><path d="M0 4h5L2.500 0z" fill="#2c4f9a"/></svg>
<div class="t" style="left:1452.91px;top:853.2px;font:11.500px 'DejaVu Sans',sans-serif;color:#000;transform:scaleX(1.5271);transform-origin:0 0;">-- , --</div>
<div class="t" style="left:1559.33px;top:853.2px;font:11.500px 'DejaVu Sans',sans-serif;color:#000;transform:scaleX(0.8954);transform-origin:0 0;">0</div>
<svg class="abs" style="left:1570px;top:842px;width:16px;height:14px" viewBox="0 0 16 14"><path d="M0 14h16L8 0z" fill="#c4c4c4"/></svg>
</body></html>
